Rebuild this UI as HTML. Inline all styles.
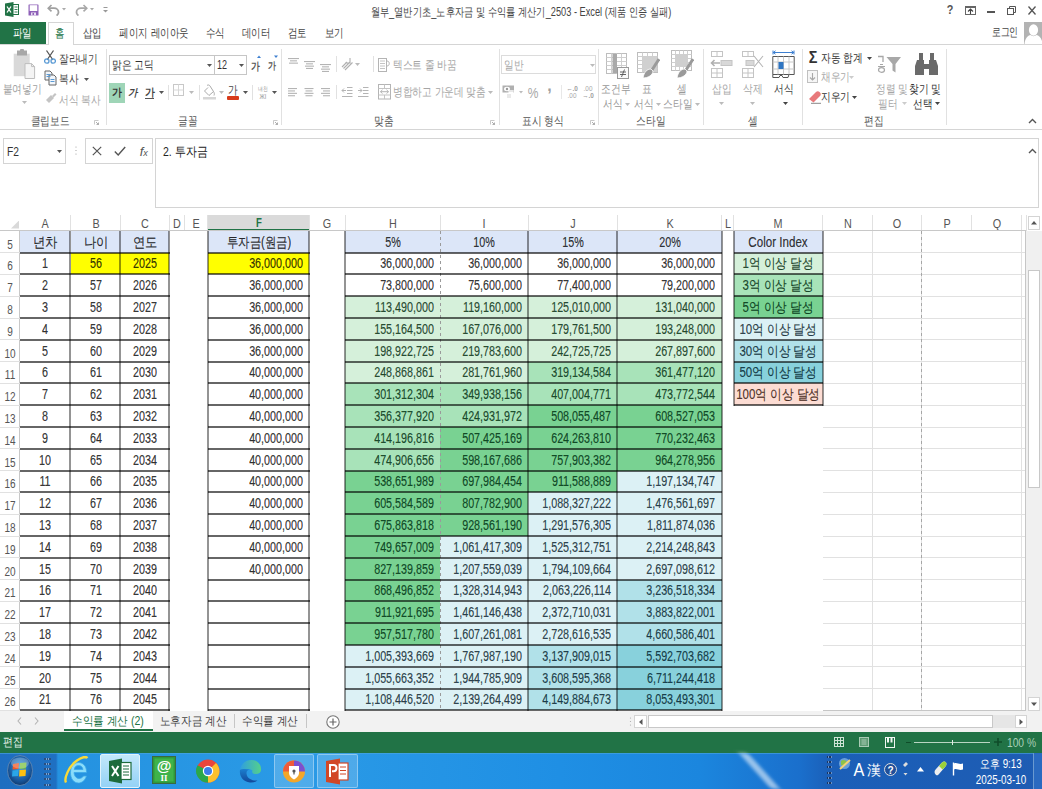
<!DOCTYPE html><html><head><meta charset="utf-8"><style>
body{margin:0;width:1042px;height:789px;overflow:hidden;background:#fff;position:relative;font-family:"Liberation Sans",sans-serif}
.t{position:absolute;white-space:nowrap;line-height:1;}
.r{position:absolute;box-sizing:border-box}
</style></head><body>
<div class="r" style="left:0px;top:0px;width:1042px;height:44px;background:#fff;"></div>
<div class="t" style="left:521px;top:12.4px;font-size:12px;color:#444;font-weight:normal;transform:translate(-50%,-50%) scaleX(0.77);transform-origin:center center;">월부_열반기초_노후자금 및 수익률 계산기_2503 - Excel (제품 인증 실패)</div>
<svg class="r" style="left:5px;top:2px;" width="14" height="15" viewBox="0 0 14 15"><path d="M0 1.5L8.5 0V15L0 13.5Z" fill="#217346"/><rect x="8" y="2.5" width="5.5" height="10" fill="#fff" stroke="#217346" stroke-width="1"/><path d="M9.5 5H12.5M9.5 7.5H12.5M9.5 10H12.5" stroke="#217346" stroke-width="0.9"/><path d="M2 4.5L6 10.5M6 4.5L2 10.5" stroke="#fff" stroke-width="1.3"/></svg>
<svg class="r" style="left:27.5px;top:3.5px;" width="11" height="12" viewBox="0 0 11 12"><rect x="0.5" y="0.5" width="10" height="11" fill="#8e60b8" rx="0.5"/><rect x="1.7" y="1.2" width="7.6" height="5.8" fill="#fff"/><rect x="3" y="8.5" width="5" height="3" fill="#e8e0f0"/><rect x="4.5" y="9" width="1.5" height="2" fill="#8e60b8"/></svg>
<svg class="r" style="left:47px;top:3.5px;" width="13" height="12" viewBox="0 0 13 12"><path d="M4.5 1L1.2 4.2L4.5 7.4" fill="none" stroke="#a0a0a0" stroke-width="1.6"/><path d="M1.8 4.2H7C9.6 4.2 11.5 6 11.5 8.2C11.5 9.8 10.6 11 9.5 11.5" fill="none" stroke="#a0a0a0" stroke-width="1.8"/></svg>
<svg class="r" style="left:62px;top:8px;" width="4" height="3" viewBox="0 0 4 3"><path d="M0 0H4L2 2.5Z" fill="#aaa"/></svg>
<svg class="r" style="left:74.5px;top:3.5px;" width="13" height="12" viewBox="0 0 13 12"><path d="M8.5 1L11.8 4.2L8.5 7.4" fill="none" stroke="#a8a8a8" stroke-width="1.6"/><path d="M11.2 4.2H6C3.4 4.2 1.5 6 1.5 8.2C1.5 9.8 2.4 11 3.5 11.5" fill="none" stroke="#a8a8a8" stroke-width="1.8"/></svg>
<svg class="r" style="left:90px;top:8px;" width="4" height="3" viewBox="0 0 4 3"><path d="M0 0H4L2 2.5Z" fill="#aaa"/></svg>
<svg class="r" style="left:102.5px;top:7px;" width="5" height="6" viewBox="0 0 5 6"><path d="M0.5 0.5H4.5" stroke="#999"/><path d="M0 3H5L2.5 5.5Z" fill="#999"/></svg>
<div class="t" style="left:950px;top:10px;font-size:12px;color:#555;font-weight:bold;transform:translate(-50%,-50%) scaleX(0.9);transform-origin:center center;">?</div>
<svg class="r" style="left:965px;top:5.5px;" width="11" height="9" viewBox="0 0 11 9"><rect x="0.5" y="0.5" width="10" height="8" fill="#fff" stroke="#666"/><rect x="0.5" y="0.5" width="10" height="1.5" fill="#666"/><path d="M5.5 8V3.5M3 5.5L5.5 3L8 5.5" fill="none" stroke="#444" stroke-width="1.1"/></svg>
<div class="r" style="left:987px;top:11.3px;width:7.5px;height:1.3px;background:#555;"></div>
<svg class="r" style="left:1007px;top:5.5px;" width="9" height="9" viewBox="0 0 9 9"><rect x="0.5" y="2.5" width="6" height="6" fill="#fff" stroke="#555"/><path d="M2.5 2.5V0.5H8.5V6.5H6.5" fill="none" stroke="#555"/></svg>
<svg class="r" style="left:1027.5px;top:5.5px;" width="8" height="9" viewBox="0 0 8 9"><path d="M0.5 0.5L7.5 8.5M7.5 0.5L0.5 8.5" stroke="#555" stroke-width="1.3"/></svg>
<div class="r" style="left:0px;top:22px;width:45.5px;height:22px;background:#217346;"></div>
<div class="t" style="left:21.5px;top:32.6px;font-size:12px;color:#fff;font-weight:normal;transform:translate(-50%,-50%) scaleX(0.79);transform-origin:center center;">파일</div>
<div class="r" style="left:0px;top:43.5px;width:1042px;height:1px;background:#d5d5d5;"></div>
<div class="r" style="left:48px;top:22px;width:25.6px;height:22.5px;background:#fff;border:1px solid #d5d5d5;border-bottom:none"></div>
<div class="t" style="left:60px;top:32.6px;font-size:12px;color:#217346;font-weight:normal;transform:translate(-50%,-50%) scaleX(0.79);transform-origin:center center;">홈</div>
<div class="t" style="left:92.2px;top:32.6px;font-size:12px;color:#444;font-weight:normal;transform:translate(-50%,-50%) scaleX(0.79);transform-origin:center center;">삽입</div>
<div class="t" style="left:153.5px;top:32.6px;font-size:12px;color:#444;font-weight:normal;transform:translate(-50%,-50%) scaleX(0.79);transform-origin:center center;">페이지 레이아웃</div>
<div class="t" style="left:214.5px;top:32.6px;font-size:12px;color:#444;font-weight:normal;transform:translate(-50%,-50%) scaleX(0.79);transform-origin:center center;">수식</div>
<div class="t" style="left:256.1px;top:32.6px;font-size:12px;color:#444;font-weight:normal;transform:translate(-50%,-50%) scaleX(0.79);transform-origin:center center;">데이터</div>
<div class="t" style="left:297.0px;top:32.6px;font-size:12px;color:#444;font-weight:normal;transform:translate(-50%,-50%) scaleX(0.79);transform-origin:center center;">검토</div>
<div class="t" style="left:334.0px;top:32.6px;font-size:12px;color:#444;font-weight:normal;transform:translate(-50%,-50%) scaleX(0.79);transform-origin:center center;">보기</div>
<div class="t" style="left:1004.5px;top:32.2px;font-size:12px;color:#444;font-weight:normal;transform:translate(-50%,-50%) scaleX(0.74);transform-origin:center center;">로그인</div>
<div class="r" style="left:1023.5px;top:22px;width:18.5px;height:22px;background:#b3b3b3;"></div>
<svg class="r" style="left:1023.5px;top:22px;" width="18.5" height="22" viewBox="0 0 18.5 22"><ellipse cx="9.5" cy="8" rx="4.6" ry="5.8" fill="#fff"/><path d="M0.5 22C1 16 4 13.5 6.5 13C8 14.5 11 14.5 12.5 13C15 13.5 18 16 18.5 22Z" fill="#fff"/></svg>
<div class="r" style="left:0px;top:44.5px;width:1042px;height:84.5px;background:#fff;"></div>
<div class="r" style="left:0px;top:128.7px;width:1042px;height:1.2px;background:#d5d5d5;"></div>
<div class="r" style="left:106px;top:49px;width:1px;height:76px;background:#e1e1e1;"></div>
<div class="r" style="left:281.4px;top:49px;width:1px;height:76px;background:#e1e1e1;"></div>
<div class="r" style="left:498.7px;top:49px;width:1px;height:76px;background:#e1e1e1;"></div>
<div class="r" style="left:598px;top:49px;width:1px;height:76px;background:#e1e1e1;"></div>
<div class="r" style="left:703px;top:49px;width:1px;height:76px;background:#e1e1e1;"></div>
<div class="r" style="left:802.3px;top:49px;width:1px;height:76px;background:#e1e1e1;"></div>
<div class="r" style="left:945.8px;top:49px;width:1px;height:76px;background:#e1e1e1;"></div>
<div class="t" style="left:50px;top:121.3px;font-size:12px;color:#555;font-weight:normal;transform:translate(-50%,-50%) scaleX(0.81);transform-origin:center center;">클립보드</div>
<div class="t" style="left:188px;top:121.3px;font-size:12px;color:#555;font-weight:normal;transform:translate(-50%,-50%) scaleX(0.81);transform-origin:center center;">글꼴</div>
<div class="t" style="left:383.5px;top:121.3px;font-size:12px;color:#555;font-weight:normal;transform:translate(-50%,-50%) scaleX(0.81);transform-origin:center center;">맞춤</div>
<div class="t" style="left:542.5px;top:121.3px;font-size:12px;color:#555;font-weight:normal;transform:translate(-50%,-50%) scaleX(0.81);transform-origin:center center;">표시 형식</div>
<div class="t" style="left:650.5px;top:121.3px;font-size:12px;color:#555;font-weight:normal;transform:translate(-50%,-50%) scaleX(0.81);transform-origin:center center;">스타일</div>
<div class="t" style="left:752.5px;top:121.3px;font-size:12px;color:#555;font-weight:normal;transform:translate(-50%,-50%) scaleX(0.81);transform-origin:center center;">셀</div>
<div class="t" style="left:874px;top:121.3px;font-size:12px;color:#555;font-weight:normal;transform:translate(-50%,-50%) scaleX(0.81);transform-origin:center center;">편집</div>
<svg class="r" style="left:94px;top:120px;" width="5" height="5" viewBox="0 0 5 5"><path d="M0.5 4.5V0.5H4.5" fill="none" stroke="#bbb" stroke-width="0.8"/><path d="M2 2L4.5 4.5M2.5 4.5H4.5V2.5" fill="none" stroke="#999" stroke-width="0.8"/></svg>
<svg class="r" style="left:273.4px;top:120px;" width="5" height="5" viewBox="0 0 5 5"><path d="M0.5 4.5V0.5H4.5" fill="none" stroke="#bbb" stroke-width="0.8"/><path d="M2 2L4.5 4.5M2.5 4.5H4.5V2.5" fill="none" stroke="#999" stroke-width="0.8"/></svg>
<svg class="r" style="left:490px;top:120px;" width="5" height="5" viewBox="0 0 5 5"><path d="M0.5 4.5V0.5H4.5" fill="none" stroke="#bbb" stroke-width="0.8"/><path d="M2 2L4.5 4.5M2.5 4.5H4.5V2.5" fill="none" stroke="#999" stroke-width="0.8"/></svg>
<svg class="r" style="left:590px;top:120px;" width="5" height="5" viewBox="0 0 5 5"><path d="M0.5 4.5V0.5H4.5" fill="none" stroke="#bbb" stroke-width="0.8"/><path d="M2 2L4.5 4.5M2.5 4.5H4.5V2.5" fill="none" stroke="#999" stroke-width="0.8"/></svg>
<svg class="r" style="left:13px;top:49px;" width="24" height="31" viewBox="0 0 24 31"><rect x="0.7" y="4.7" width="16" height="22.5" fill="#d9d9d9"/><rect x="4" y="1.5" width="10" height="5" fill="#a8a8a8"/><rect x="7" y="0" width="4" height="3" rx="1" fill="#a8a8a8"/><path d="M12 14.6H18.6L21.6 17.6V29.5H12Z" fill="#f4f4f4" stroke="#bdbdbd" stroke-width="1"/><path d="M18.6 14.6V17.6H21.6" fill="none" stroke="#bdbdbd"/></svg>
<div class="t" style="left:22.2px;top:88.7px;font-size:12px;color:#a0a0a0;font-weight:normal;transform:translate(-50%,-50%) scaleX(0.81);transform-origin:center center;">붙여넣기</div>
<svg class="r" style="left:22px;top:101px;" width="5" height="3" viewBox="0 0 5 3"><path d="M0 0H5L2.5 3Z" fill="#bbb"/></svg>
<svg class="r" style="left:44px;top:50px;" width="12" height="14" viewBox="0 0 12 14"><path d="M2.5 0.5L9 10M9.5 0.5L3 10" stroke="#555" stroke-width="1.3"/><circle cx="2.8" cy="11" r="2.2" fill="none" stroke="#5b9bd5" stroke-width="1.3"/><circle cx="9.2" cy="11" r="2.2" fill="none" stroke="#5b9bd5" stroke-width="1.3"/></svg>
<div class="t" style="left:59px;top:58.5px;font-size:12px;color:#444;font-weight:normal;transform:translate(0,-50%) scaleX(0.81);transform-origin:left center;">잘라내기</div>
<svg class="r" style="left:44px;top:70px;" width="13" height="16" viewBox="0 0 13 16"><path d="M1 1H6L8 3V10H1Z" fill="#f2f6fb" stroke="#666" stroke-width="1"/><path d="M5 5H10L12 7V15H5Z" fill="#f2f6fb" stroke="#666" stroke-width="1"/><path d="M2.5 4.5H6.5M2.5 6.5H6.5M6.5 9.5H10.5M6.5 11.5H10.5" stroke="#5b9bd5" stroke-width="1"/></svg>
<div class="t" style="left:59px;top:79px;font-size:12px;color:#444;font-weight:normal;transform:translate(0,-50%) scaleX(0.81);transform-origin:left center;">복사</div>
<svg class="r" style="left:83.5px;top:77.5px;" width="5" height="3" viewBox="0 0 5 3"><path d="M0 0H5L2.5 3Z" fill="#555"/></svg>
<svg class="r" style="left:45px;top:92px;" width="12" height="13" viewBox="0 0 12 13"><path d="M1 8L6 3L9 6L4 11Z" fill="#c4c4c4"/><path d="M7 4L10 1L11.5 2.5L8.5 5.5Z" fill="#c4c4c4"/></svg>
<div class="t" style="left:59px;top:100px;font-size:12px;color:#a8a8a8;font-weight:normal;transform:translate(0,-50%) scaleX(0.81);transform-origin:left center;">서식 복사</div>
<div class="r" style="left:109px;top:55px;width:105.5px;height:19.6px;background:#fff;border:1px solid #c6c6c6"></div>
<div class="r" style="left:214px;top:55px;width:32.8px;height:19.6px;background:#fff;border:1px solid #c6c6c6"></div>
<div class="t" style="left:111.5px;top:65px;font-size:12px;color:#333;font-weight:normal;transform:translate(0,-50%) scaleX(0.81);transform-origin:left center;">맑은 고딕</div>
<div class="t" style="left:216.5px;top:65px;font-size:12px;color:#333;font-weight:normal;transform:translate(0,-50%) scaleX(0.75);transform-origin:left center;">12</div>
<svg class="r" style="left:206.9px;top:64px;" width="5" height="3" viewBox="0 0 5 3"><path d="M0 0H5L2.5 3Z" fill="#555"/></svg>
<svg class="r" style="left:239.4px;top:64px;" width="5" height="3" viewBox="0 0 5 3"><path d="M0 0H5L2.5 3Z" fill="#555"/></svg>
<div class="t" style="left:254.5px;top:65.8px;font-size:11px;color:#555;font-weight:bold;transform:translate(-50%,-50%) scaleX(0.8);transform-origin:center center;">가</div>
<div class="t" style="left:271.5px;top:66.3px;font-size:10px;color:#555;font-weight:bold;transform:translate(-50%,-50%) scaleX(0.8);transform-origin:center center;">가</div>
<svg class="r" style="left:257px;top:55px;" width="4" height="4" viewBox="0 0 4 4"><path d="M0 3L2 0.5L4 3Z" fill="#3d7fd0"/></svg>
<svg class="r" style="left:274px;top:55px;" width="4" height="4" viewBox="0 0 4 4"><path d="M0 0.5H4L2 3Z" fill="#3d7fd0"/></svg>
<div class="r" style="left:109.2px;top:82.8px;width:16px;height:20px;background:#9fd5b7;"></div>
<div class="t" style="left:117.2px;top:92.3px;font-size:10.5px;color:#333;font-weight:bold;transform:translate(-50%,-50%) scaleX(0.9);transform-origin:center center;">가</div>
<div class="t" style="left:133px;top:92.3px;font-size:10.5px;color:#444;font-weight:bold;transform:translate(-50%,-50%) scaleX(0.9);transform-origin:center center;font-style:italic">가</div>
<div class="t" style="left:149.5px;top:92.3px;font-size:10.5px;color:#444;font-weight:bold;transform:translate(-50%,-50%) scaleX(0.9);transform-origin:center center;">가</div>
<div class="r" style="left:145px;top:97.8px;width:9px;height:1px;background:#555;"></div>
<svg class="r" style="left:159px;top:91px;" width="5" height="3" viewBox="0 0 5 3"><path d="M0 0H5L2.5 3Z" fill="#555"/></svg>
<div class="r" style="left:168px;top:85px;width:1px;height:15px;background:#e1e1e1;"></div>
<svg class="r" style="left:173px;top:84px;" width="11" height="12" viewBox="0 0 11 12"><rect x="0.5" y="0.5" width="10" height="11" fill="none" stroke="#c8c8c8"/><path d="M5.5 0.5V11.5M0.5 6H10.5" stroke="#d8d8d8"/></svg>
<svg class="r" style="left:188.5px;top:91px;" width="5" height="3" viewBox="0 0 5 3"><path d="M0 0H5L2.5 3Z" fill="#bbb"/></svg>
<div class="r" style="left:198.5px;top:85px;width:1px;height:15px;background:#e1e1e1;"></div>
<svg class="r" style="left:203px;top:84px;" width="13" height="16" viewBox="0 0 13 16"><path d="M4 1.5C5 0.5 6.5 1 7 2L10.5 7.5L6 11.5L1.5 7L5 3.5" fill="none" stroke="#aaa" stroke-width="1"/><path d="M10.5 7.5C11.5 9 11.5 10.5 11 11.5" fill="none" stroke="#aaa"/><rect x="0" y="13" width="13" height="2.5" fill="#d6d6d6"/></svg>
<svg class="r" style="left:219px;top:91px;" width="5" height="3" viewBox="0 0 5 3"><path d="M0 0H5L2.5 3Z" fill="#bbb"/></svg>
<div class="t" style="left:233px;top:90px;font-size:12px;color:#444;font-weight:normal;transform:translate(-50%,-50%) scaleX(0.81);transform-origin:center center;">가</div>
<div class="r" style="left:227.2px;top:96.2px;width:11.5px;height:3.4px;background:#d83b1a;border-radius:1px"></div>
<svg class="r" style="left:242.5px;top:91px;" width="5" height="3" viewBox="0 0 5 3"><path d="M0 0H5L2.5 3Z" fill="#555"/></svg>
<div class="r" style="left:252.2px;top:85px;width:1px;height:15px;background:#e1e1e1;"></div>
<div class="t" style="left:262.5px;top:88.5px;font-size:6px;color:#999;font-weight:normal;transform:translate(-50%,-50%) scaleX(0.81);transform-origin:center center;">내천</div>
<div class="t" style="left:262.5px;top:95.5px;font-size:7px;color:#999;font-weight:normal;transform:translate(-50%,-50%) scaleX(0.81);transform-origin:center center;">ЖI</div>
<svg class="r" style="left:272.2px;top:91px;" width="5" height="3" viewBox="0 0 5 3"><path d="M0 0H5L2.5 3Z" fill="#555"/></svg>
<svg class="r" style="left:287.5px;top:57.8px;" width="11" height="7.8999999999999995" viewBox="0 0 11 7.8999999999999995"><rect x="0.0" y="0.0" width="11" height="1.1" fill="#b4b4b4"/><rect x="2.0" y="2.3" width="7" height="1.1" fill="#b4b4b4"/><rect x="1.0" y="4.6" width="9" height="1.1" fill="#b4b4b4"/></svg>
<svg class="r" style="left:303.5px;top:60.5px;" width="11" height="10.2" viewBox="0 0 11 10.2"><rect x="0.0" y="0.0" width="11" height="1.1" fill="#b4b4b4"/><rect x="2.0" y="2.3" width="7" height="1.1" fill="#b4b4b4"/><rect x="1.0" y="4.6" width="9" height="1.1" fill="#b4b4b4"/><rect x="2.0" y="6.8999999999999995" width="7" height="1.1" fill="#b4b4b4"/></svg>
<svg class="r" style="left:319.5px;top:63.7px;" width="11" height="10.2" viewBox="0 0 11 10.2"><rect x="0.0" y="0.0" width="11" height="1.1" fill="#b4b4b4"/><rect x="2.0" y="2.3" width="7" height="1.1" fill="#b4b4b4"/><rect x="1.0" y="4.6" width="9" height="1.1" fill="#b4b4b4"/><rect x="2.0" y="6.8999999999999995" width="7" height="1.1" fill="#b4b4b4"/></svg>
<div class="r" style="left:335.8px;top:56px;width:1px;height:16px;background:#e1e1e1;"></div>
<svg class="r" style="left:340.5px;top:57px;" width="13" height="15" viewBox="0 0 13 15"><path d="M1 10L6 5M2.5 11.5L9 5M4 13L11.5 5.5M9 1V6H4" fill="none" stroke="#b0b0b0" stroke-width="1.1"/></svg>
<svg class="r" style="left:355px;top:63px;" width="5" height="3" viewBox="0 0 5 3"><path d="M0 0H5L2.5 3Z" fill="#bbb"/></svg>
<div class="r" style="left:373.3px;top:56px;width:1px;height:16px;background:#e1e1e1;"></div>
<svg class="r" style="left:378px;top:57.5px;" width="13" height="15" viewBox="0 0 13 15"><rect x="0.5" y="0.5" width="8" height="13" fill="none" stroke="#b4b4b4"/><path d="M2 3H7M2 5.5H7M2 8H7M2 10.5H7" stroke="#c4c4c4"/><path d="M9 3C12 3 12 8 9 8" fill="none" stroke="#b4b4b4"/></svg>
<div class="t" style="left:393px;top:65px;font-size:12px;color:#a6a6a6;font-weight:normal;transform:translate(0,-50%) scaleX(0.81);transform-origin:left center;">텍스트 줄 바꿈</div>
<svg class="r" style="left:288px;top:87.5px;" width="11" height="10.6" viewBox="0 0 11 10.6"><rect x="0" y="0.0" width="9" height="1.1" fill="#b4b4b4"/><rect x="0" y="2.4" width="7" height="1.1" fill="#b4b4b4"/><rect x="0" y="4.8" width="9" height="1.1" fill="#b4b4b4"/><rect x="0" y="7.199999999999999" width="7" height="1.1" fill="#b4b4b4"/></svg>
<svg class="r" style="left:303.5px;top:87.5px;" width="10" height="10.6" viewBox="0 0 10 10.6"><rect x="0.5" y="0.0" width="9" height="1.1" fill="#b4b4b4"/><rect x="1.5" y="2.4" width="7" height="1.1" fill="#b4b4b4"/><rect x="0.5" y="4.8" width="9" height="1.1" fill="#b4b4b4"/><rect x="1.5" y="7.199999999999999" width="7" height="1.1" fill="#b4b4b4"/></svg>
<svg class="r" style="left:320.5px;top:87.5px;" width="9" height="10.6" viewBox="0 0 9 10.6"><rect x="0" y="0.0" width="9" height="1.1" fill="#b4b4b4"/><rect x="2" y="2.4" width="7" height="1.1" fill="#b4b4b4"/><rect x="0" y="4.8" width="9" height="1.1" fill="#b4b4b4"/><rect x="2" y="7.199999999999999" width="7" height="1.1" fill="#b4b4b4"/></svg>
<div class="r" style="left:335.8px;top:85px;width:1px;height:14px;background:#e1e1e1;"></div>
<svg class="r" style="left:341px;top:87px;" width="12" height="10" viewBox="0 0 12 10"><path d="M6 0.5H11.5M6 3.5H11.5M6 6.5H11.5M1 9.5H11.5M5 3.5L1 3.5M3 1.5L1 3.5L3 5.5" fill="none" stroke="#b4b4b4" stroke-width="1"/></svg>
<svg class="r" style="left:357px;top:87px;" width="12" height="10" viewBox="0 0 12 10"><path d="M6 0.5H11.5M6 3.5H11.5M6 6.5H11.5M1 9.5H11.5M1 3.5H5M3 1.5L5 3.5L3 5.5" fill="none" stroke="#b4b4b4" stroke-width="1"/></svg>
<svg class="r" style="left:378px;top:84.3px;" width="13" height="15.5" viewBox="0 0 13 15.5"><rect x="0.5" y="0.5" width="12" height="14.5" fill="none" stroke="#b4b4b4"/><path d="M0.5 4.5H12.5M0.5 11H12.5M6.5 0.5V4.5M6.5 11V15" stroke="#c4c4c4"/><path d="M2.5 7.7H10.5M4.5 5.8L2.5 7.7L4.5 9.6M8.5 5.8L10.5 7.7L8.5 9.6" fill="none" stroke="#b4b4b4"/></svg>
<div class="t" style="left:393px;top:92px;font-size:12px;color:#a6a6a6;font-weight:normal;transform:translate(0,-50%) scaleX(0.81);transform-origin:left center;">병합하고 가운데 맞춤</div>
<svg class="r" style="left:488px;top:91px;" width="5" height="3" viewBox="0 0 5 3"><path d="M0 0H5L2.5 3Z" fill="#bbb"/></svg>
<div class="r" style="left:501px;top:55px;width:94.5px;height:19.2px;background:#fff;border:1px solid #dcdcdc"></div>
<div class="t" style="left:503.5px;top:65px;font-size:12px;color:#a8a8a8;font-weight:normal;transform:translate(0,-50%) scaleX(0.81);transform-origin:left center;">일반</div>
<svg class="r" style="left:589.5px;top:64px;" width="5" height="3" viewBox="0 0 5 3"><path d="M0 0H5L2.5 3Z" fill="#bbb"/></svg>
<svg class="r" style="left:502px;top:85px;" width="13" height="14" viewBox="0 0 13 14"><rect x="0.5" y="0.5" width="11.5" height="7" fill="#b0b0b0"/><ellipse cx="5" cy="4" rx="3" ry="2.2" fill="#fff"/><circle cx="5" cy="4" r="1.2" fill="#999"/><rect x="6.5" y="5" width="5" height="3" fill="#fff"/><path d="M7 6H11M5 10H9M5 12H9" stroke="#c8c8c8" stroke-width="0.8"/></svg>
<svg class="r" style="left:519px;top:91px;" width="4" height="3" viewBox="0 0 4 3"><path d="M0 0H4L2 2.5Z" fill="#bbb"/></svg>
<div class="t" style="left:533px;top:92px;font-size:15px;color:#a8a8a8;font-weight:normal;transform:translate(-50%,-50%) scaleX(0.8);transform-origin:center center;">%</div>
<div class="t" style="left:549.5px;top:86px;font-size:16px;color:#a0a0a0;font-weight:bold;transform:translate(-50%,-50%) scaleX(1);transform-origin:center center;">,</div>
<div class="r" style="left:560.6px;top:85px;width:1px;height:14px;background:#e8e8e8;"></div>
<div class="t" style="left:571.5px;top:88.5px;font-size:7.5px;color:#a0a0a0;font-weight:bold;transform:translate(-50%,-50%) scaleX(0.85);transform-origin:center center;">←.0</div>
<div class="t" style="left:572px;top:95.5px;font-size:7.5px;color:#a8a8a8;font-weight:normal;transform:translate(-50%,-50%) scaleX(0.85);transform-origin:center center;">.00</div>
<div class="t" style="left:588px;top:88.5px;font-size:7.5px;color:#a8a8a8;font-weight:normal;transform:translate(-50%,-50%) scaleX(0.85);transform-origin:center center;">.00</div>
<div class="t" style="left:587.5px;top:95.5px;font-size:7.5px;color:#a0a0a0;font-weight:bold;transform:translate(-50%,-50%) scaleX(0.85);transform-origin:center center;">→.0</div>
<svg class="r" style="left:606.2px;top:53.3px;" width="21" height="21" viewBox="0 0 21 21"><rect x="0.5" y="0.5" width="20" height="20" fill="#fff" stroke="#bdbdbd"/><path d="M5.5 0.5V20.5" stroke="#cfcfcf"/><path d="M10.5 0.5V20.5" stroke="#cfcfcf"/><path d="M15.5 0.5V20.5" stroke="#cfcfcf"/><path d="M0.5 4.5H20.5" stroke="#cfcfcf"/><path d="M0.5 8.5H20.5" stroke="#cfcfcf"/><path d="M0.5 12.5H20.5" stroke="#cfcfcf"/><path d="M0.5 16.5H20.5" stroke="#cfcfcf"/><rect x="6.5" y="1" width="4.5" height="19" fill="#a9a9a9"/></svg>
<svg class="r" style="left:617px;top:67px;" width="12" height="12" viewBox="0 0 12 12"><rect x="0.5" y="0.5" width="11" height="11" fill="#fafafa" stroke="#9a9a9a"/><path d="M3 5H9M3 7.5H9M7.5 2.5L4.5 10" stroke="#555" stroke-width="0.9"/></svg>
<svg class="r" style="left:637px;top:52.3px;" width="21" height="21" viewBox="0 0 21 21"><rect x="0.5" y="0.5" width="20" height="20" fill="#fff" stroke="#bdbdbd"/><path d="M5.5 0.5V20.5" stroke="#cfcfcf"/><path d="M10.5 0.5V20.5" stroke="#cfcfcf"/><path d="M15.5 0.5V20.5" stroke="#cfcfcf"/><path d="M0.5 4.5H20.5" stroke="#cfcfcf"/><path d="M0.5 8.5H20.5" stroke="#cfcfcf"/><path d="M0.5 12.5H20.5" stroke="#cfcfcf"/><path d="M0.5 16.5H20.5" stroke="#cfcfcf"/><rect x="5.5" y="5" width="15" height="15" fill="#d0d0d0"/></svg>
<svg class="r" style="left:642px;top:58px;" width="18" height="21" viewBox="0 0 18 21"><path d="M17 1L10 12" stroke="#9a9a9a" stroke-width="3"/><path d="M9 11C5 11 2 14 1 20C6 20 11 17 11 13Z" fill="#9a9a9a" stroke="#fff" stroke-width="0.8"/></svg>
<svg class="r" style="left:670.5px;top:50.4px;" width="21" height="21" viewBox="0 0 21 21"><rect x="0.5" y="0.5" width="20" height="20" fill="#fff" stroke="#bdbdbd"/><path d="M4.5 0.5V20.5" stroke="#cfcfcf"/><path d="M8.5 0.5V20.5" stroke="#cfcfcf"/><path d="M12.5 0.5V20.5" stroke="#cfcfcf"/><path d="M16.5 0.5V20.5" stroke="#cfcfcf"/><path d="M0.5 4.5H20.5" stroke="#cfcfcf"/><path d="M0.5 8.5H20.5" stroke="#cfcfcf"/><path d="M0.5 12.5H20.5" stroke="#cfcfcf"/><path d="M0.5 16.5H20.5" stroke="#cfcfcf"/><rect x="5" y="5" width="11" height="11" fill="#cfcfcf"/></svg>
<svg class="r" style="left:676px;top:58px;" width="18" height="21" viewBox="0 0 18 21"><path d="M17 1L10 12" stroke="#9a9a9a" stroke-width="3"/><path d="M9 11C5 11 2 14 1 20C6 20 11 17 11 13Z" fill="#9a9a9a" stroke="#fff" stroke-width="0.8"/></svg>
<div class="t" style="left:616.2px;top:88.6px;font-size:12px;color:#999;font-weight:normal;transform:translate(-50%,-50%) scaleX(0.81);transform-origin:center center;">조건부</div>
<div class="t" style="left:647px;top:88.6px;font-size:12px;color:#999;font-weight:normal;transform:translate(-50%,-50%) scaleX(0.81);transform-origin:center center;">표</div>
<div class="t" style="left:681.5px;top:88.6px;font-size:12px;color:#999;font-weight:normal;transform:translate(-50%,-50%) scaleX(0.81);transform-origin:center center;">셀</div>
<div class="t" style="left:613px;top:103.7px;font-size:12px;color:#999;font-weight:normal;transform:translate(-50%,-50%) scaleX(0.81);transform-origin:center center;">서식</div>
<div class="t" style="left:644px;top:103.7px;font-size:12px;color:#999;font-weight:normal;transform:translate(-50%,-50%) scaleX(0.81);transform-origin:center center;">서식</div>
<div class="t" style="left:678px;top:103.7px;font-size:12px;color:#999;font-weight:normal;transform:translate(-50%,-50%) scaleX(0.81);transform-origin:center center;">스타일</div>
<svg class="r" style="left:624.5px;top:102.5px;" width="5" height="3" viewBox="0 0 5 3"><path d="M0 0H5L2.5 3Z" fill="#bbb"/></svg>
<svg class="r" style="left:655.5px;top:102.5px;" width="5" height="3" viewBox="0 0 5 3"><path d="M0 0H5L2.5 3Z" fill="#bbb"/></svg>
<svg class="r" style="left:694.5px;top:102.5px;" width="5" height="3" viewBox="0 0 5 3"><path d="M0 0H5L2.5 3Z" fill="#bbb"/></svg>
<svg class="r" style="left:710px;top:51px;" width="23" height="27" viewBox="0 0 23 27"><rect x="1.5" y="0.5" width="11" height="5" fill="none" stroke="#c4c4c4"/><path d="M7 0.5V5.5" stroke="#c4c4c4"/><rect x="11" y="9.5" width="11" height="5" fill="#d8d8d8" stroke="#c4c4c4"/><path d="M10 12H1.5M4.5 9L1.5 12L4.5 15" fill="none" stroke="#b0b0b0" stroke-width="1.6"/><rect x="1.5" y="17.5" width="11" height="9" fill="none" stroke="#c4c4c4"/><path d="M7 17.5V26.5M1.5 22H12.5" stroke="#c4c4c4"/></svg>
<svg class="r" style="left:741px;top:51px;" width="24" height="27" viewBox="0 0 24 27"><rect x="1.5" y="0.5" width="11" height="5" fill="none" stroke="#c4c4c4"/><path d="M7 0.5V5.5" stroke="#c4c4c4"/><rect x="5" y="9.5" width="8" height="5" fill="#d8d8d8" stroke="#c4c4c4"/><path d="M13 5L22 16M22 5L13 16" stroke="#b4b4b4" stroke-width="1.1"/><rect x="1.5" y="17.5" width="11" height="9" fill="none" stroke="#c4c4c4"/><path d="M7 17.5V26.5M1.5 22H12.5" stroke="#c4c4c4"/></svg>
<svg class="r" style="left:772px;top:49.5px;" width="23" height="29" viewBox="0 0 23 29"><path d="M1 2.5H22M1 0.5V4.5M22 0.5V4.5M3.5 0.8L1.3 2.5L3.5 4.2M19.5 0.8L21.7 2.5L19.5 4.2" fill="none" stroke="#3d7fd0" stroke-width="1"/><path d="M0.8 6.5H22.2V24.5H0.8Z" fill="#fff" stroke="#555" stroke-width="1"/><path d="M6 6.5V24.5M11.5 6.5V24.5M17 6.5V24.5M0.8 12H22.2M0.8 19H22.2" stroke="#c8c8c8"/><rect x="6.5" y="12" width="5" height="7" fill="#2f75c2"/><path d="M0.8 24.5V27.5H7L8 25.5H10L11 27.5H16L17 24.5" fill="none" stroke="#555"/></svg>
<div class="t" style="left:721.5px;top:88.7px;font-size:12px;color:#a6a6a6;font-weight:normal;transform:translate(-50%,-50%) scaleX(0.81);transform-origin:center center;">삽입</div>
<div class="t" style="left:753px;top:88.7px;font-size:12px;color:#a6a6a6;font-weight:normal;transform:translate(-50%,-50%) scaleX(0.81);transform-origin:center center;">삭제</div>
<div class="t" style="left:783.5px;top:88.7px;font-size:12px;color:#444;font-weight:normal;transform:translate(-50%,-50%) scaleX(0.81);transform-origin:center center;">서식</div>
<svg class="r" style="left:719px;top:101.5px;" width="5" height="3" viewBox="0 0 5 3"><path d="M0 0H5L2.5 3Z" fill="#bbb"/></svg>
<svg class="r" style="left:750px;top:101.5px;" width="5" height="3" viewBox="0 0 5 3"><path d="M0 0H5L2.5 3Z" fill="#bbb"/></svg>
<svg class="r" style="left:783px;top:101.5px;" width="5" height="3" viewBox="0 0 5 3"><path d="M0 0H5L2.5 3Z" fill="#444"/></svg>
<div class="t" style="left:813px;top:57.5px;font-size:16px;color:#333;font-weight:bold;transform:translate(-50%,-50%) scaleX(0.9);transform-origin:center center;">Σ</div>
<div class="t" style="left:821px;top:57.5px;font-size:12px;color:#333;font-weight:normal;transform:translate(0,-50%) scaleX(0.81);transform-origin:left center;">자동 합계</div>
<svg class="r" style="left:867px;top:56.5px;" width="5" height="3" viewBox="0 0 5 3"><path d="M0 0H5L2.5 3Z" fill="#444"/></svg>
<svg class="r" style="left:807px;top:70px;" width="11" height="13" viewBox="0 0 11 13"><rect x="0.5" y="0.5" width="10" height="12" fill="#f6f6f6" stroke="#c0c0c0"/><path d="M5.5 3V10M3 7.5L5.5 10L8 7.5" fill="none" stroke="#a8a8a8" stroke-width="1.1"/></svg>
<div class="t" style="left:821px;top:77.4px;font-size:12px;color:#a8a8a8;font-weight:normal;transform:translate(0,-50%) scaleX(0.81);transform-origin:left center;">채우기</div>
<svg class="r" style="left:849px;top:76px;" width="5" height="3" viewBox="0 0 5 3"><path d="M0 0H5L2.5 3Z" fill="#ccc"/></svg>
<svg class="r" style="left:807.5px;top:90px;" width="14" height="14" viewBox="0 0 14 14"><path d="M1 9L8 2C9 1 10.5 1 11.5 2L12 2.5C13 3.5 13 5 12 6L5.5 12.5Z" fill="#e8797b"/><path d="M3 13.3H13" stroke="#888" stroke-width="1"/></svg>
<div class="t" style="left:821px;top:97.4px;font-size:12px;color:#333;font-weight:normal;transform:translate(0,-50%) scaleX(0.81);transform-origin:left center;">지우기</div>
<svg class="r" style="left:852px;top:96px;" width="5" height="3" viewBox="0 0 5 3"><path d="M0 0H5L2.5 3Z" fill="#444"/></svg>
<svg class="r" style="left:877px;top:53.5px;" width="26" height="20" viewBox="0 0 26 20"><path d="M1 2.5H6V8" fill="none" stroke="#a8a8a8" stroke-width="1.3"/><path d="M3 10.5H6M1 12.5H8" stroke="#a8a8a8" stroke-width="1.2"/><ellipse cx="4.5" cy="16" rx="3" ry="2.3" fill="none" stroke="#a8a8a8" stroke-width="1.2"/><path d="M9.5 3H24L18.5 10V18.5L15.5 16.5V10Z" fill="#a8a8a8"/></svg>
<svg class="r" style="left:914.5px;top:52px;" width="23" height="24" viewBox="0 0 23 24"><path d="M2 8H9V23H0V14Z M14 8H21L23 14V23H14Z M9 12H14V17H9Z M4 1H8V8H4Z M15 1H19V8H15Z" fill="#6a6a6a"/></svg>
<div class="t" style="left:891.5px;top:88.7px;font-size:12px;color:#a6a6a6;font-weight:normal;transform:translate(-50%,-50%) scaleX(0.81);transform-origin:center center;">정렬 및</div>
<div class="t" style="left:888px;top:103.6px;font-size:12px;color:#a6a6a6;font-weight:normal;transform:translate(-50%,-50%) scaleX(0.81);transform-origin:center center;">필터</div>
<svg class="r" style="left:901.5px;top:102.3px;" width="5" height="3" viewBox="0 0 5 3"><path d="M0 0H5L2.5 3Z" fill="#ccc"/></svg>
<div class="t" style="left:925px;top:88.7px;font-size:12px;color:#333;font-weight:normal;transform:translate(-50%,-50%) scaleX(0.81);transform-origin:center center;">찾기 및</div>
<div class="t" style="left:923px;top:103.6px;font-size:12px;color:#333;font-weight:normal;transform:translate(-50%,-50%) scaleX(0.81);transform-origin:center center;">선택</div>
<svg class="r" style="left:935px;top:102.3px;" width="5" height="3" viewBox="0 0 5 3"><path d="M0 0H5L2.5 3Z" fill="#444"/></svg>
<svg class="r" style="left:1027.5px;top:118px;" width="9" height="6" viewBox="0 0 9 6"><path d="M1 5L4.5 1.5L8 5" fill="none" stroke="#555" stroke-width="1.4"/></svg>
<div class="r" style="left:0px;top:129.9px;width:1042px;height:84.6px;background:#fff;"></div>
<div class="r" style="left:3.2px;top:137.5px;width:63px;height:26.2px;background:#fff;border:1px solid #d4d4d4"></div>
<div class="t" style="left:7px;top:151.5px;font-size:12.5px;color:#333;font-weight:normal;transform:translate(0,-50%) scaleX(0.82);transform-origin:left center;">F2</div>
<svg class="r" style="left:56.5px;top:150px;" width="5" height="3" viewBox="0 0 5 3"><path d="M0 0H5L2.5 3Z" fill="#555"/></svg>
<svg class="r" style="left:74.5px;top:146px;" width="2" height="9" viewBox="0 0 2 9"><circle cx="1" cy="1" r="0.6" fill="#999"/><circle cx="1" cy="4.5" r="0.6" fill="#999"/><circle cx="1" cy="8" r="0.6" fill="#999"/></svg>
<div class="r" style="left:85px;top:137.5px;width:68px;height:26.2px;background:#fff;border:1px solid #d4d4d4"></div>
<svg class="r" style="left:91.5px;top:145.5px;" width="10" height="10" viewBox="0 0 10 10"><path d="M0.8 0.8L9.2 9.2M9.2 0.8L0.8 9.2" stroke="#555" stroke-width="1.2"/></svg>
<svg class="r" style="left:113.5px;top:145.5px;" width="12" height="10" viewBox="0 0 12 10"><path d="M0.8 5.5L4.2 9L11.2 1" fill="none" stroke="#555" stroke-width="1.4"/></svg>
<div class="t" style="left:141.5px;top:150.5px;font-size:13px;color:#555;font-weight:normal;transform:translate(-50%,-50%) scaleX(1);transform-origin:center center;font-style:italic;font-family:"Liberation Serif",serif">f</div>
<div class="t" style="left:145.5px;top:153px;font-size:9px;color:#555;font-weight:normal;transform:translate(-50%,-50%) scaleX(1);transform-origin:center center;font-style:italic;font-family:"Liberation Serif",serif">x</div>
<div class="r" style="left:155px;top:137.5px;width:884px;height:70px;background:#fff;border:1px solid #d4d4d4"></div>
<div class="t" style="left:162.7px;top:151.5px;font-size:12.5px;color:#222;font-weight:normal;transform:translate(0,-50%) scaleX(0.84);transform-origin:left center;">2. 투자금</div>
<svg class="r" style="left:1028px;top:147.5px;" width="9" height="6" viewBox="0 0 9 6"><path d="M1 5L4.5 1.5L8 5" fill="none" stroke="#555" stroke-width="1.4"/></svg>
<div class="r" style="left:0px;top:214.5px;width:1026.4px;height:16.30000000000001px;background:#fff;"></div>
<div class="t" style="left:45.35px;top:224.3px;font-size:12px;color:#555;font-weight:normal;transform:translate(-50%,-50%) scaleX(0.9);transform-origin:center center;">A</div>
<div class="r" style="left:70.0px;top:214.5px;width:1px;height:16.30000000000001px;background:#e1e1e1;"></div>
<div class="t" style="left:95.5px;top:224.3px;font-size:12px;color:#555;font-weight:normal;transform:translate(-50%,-50%) scaleX(0.9);transform-origin:center center;">B</div>
<div class="r" style="left:120.0px;top:214.5px;width:1px;height:16.30000000000001px;background:#e1e1e1;"></div>
<div class="t" style="left:144.9px;top:224.3px;font-size:12px;color:#555;font-weight:normal;transform:translate(-50%,-50%) scaleX(0.9);transform-origin:center center;">C</div>
<div class="r" style="left:168.8px;top:214.5px;width:1px;height:16.30000000000001px;background:#e1e1e1;"></div>
<div class="t" style="left:176.85000000000002px;top:224.3px;font-size:12px;color:#555;font-weight:normal;transform:translate(-50%,-50%) scaleX(0.9);transform-origin:center center;">D</div>
<div class="r" style="left:183.9px;top:214.5px;width:1px;height:16.30000000000001px;background:#e1e1e1;"></div>
<div class="t" style="left:196.10000000000002px;top:224.3px;font-size:12px;color:#555;font-weight:normal;transform:translate(-50%,-50%) scaleX(0.9);transform-origin:center center;">E</div>
<div class="r" style="left:207.3px;top:214.5px;width:1px;height:16.30000000000001px;background:#e1e1e1;"></div>
<div class="r" style="left:207.8px;top:214.5px;width:101.59999999999997px;height:16.30000000000001px;background:#dadada;"></div>
<div class="r" style="left:207.8px;top:229.4px;width:101.59999999999997px;height:2px;background:#217346;"></div>
<div class="t" style="left:258.6px;top:223.3px;font-size:12px;color:#217346;font-weight:bold;transform:translate(-50%,-50%) scaleX(0.8);transform-origin:center center;">F</div>
<div class="r" style="left:308.9px;top:214.5px;width:1px;height:16.30000000000001px;background:#e1e1e1;"></div>
<div class="t" style="left:327.29999999999995px;top:224.3px;font-size:12px;color:#555;font-weight:normal;transform:translate(-50%,-50%) scaleX(0.9);transform-origin:center center;">G</div>
<div class="r" style="left:344.7px;top:214.5px;width:1px;height:16.30000000000001px;background:#e1e1e1;"></div>
<div class="t" style="left:392.6px;top:224.3px;font-size:12px;color:#555;font-weight:normal;transform:translate(-50%,-50%) scaleX(0.9);transform-origin:center center;">H</div>
<div class="r" style="left:439.5px;top:214.5px;width:1px;height:16.30000000000001px;background:#e1e1e1;"></div>
<div class="t" style="left:484.15px;top:224.3px;font-size:12px;color:#555;font-weight:normal;transform:translate(-50%,-50%) scaleX(0.9);transform-origin:center center;">I</div>
<div class="r" style="left:527.8px;top:214.5px;width:1px;height:16.30000000000001px;background:#e1e1e1;"></div>
<div class="t" style="left:572.8px;top:224.3px;font-size:12px;color:#555;font-weight:normal;transform:translate(-50%,-50%) scaleX(0.9);transform-origin:center center;">J</div>
<div class="r" style="left:616.8px;top:214.5px;width:1px;height:16.30000000000001px;background:#e1e1e1;"></div>
<div class="t" style="left:669.55px;top:224.3px;font-size:12px;color:#555;font-weight:normal;transform:translate(-50%,-50%) scaleX(0.9);transform-origin:center center;">K</div>
<div class="r" style="left:721.3px;top:214.5px;width:1px;height:16.30000000000001px;background:#e1e1e1;"></div>
<div class="t" style="left:727.8499999999999px;top:224.3px;font-size:12px;color:#555;font-weight:normal;transform:translate(-50%,-50%) scaleX(0.9);transform-origin:center center;">L</div>
<div class="r" style="left:733.4px;top:214.5px;width:1px;height:16.30000000000001px;background:#e1e1e1;"></div>
<div class="t" style="left:778.4px;top:224.3px;font-size:12px;color:#555;font-weight:normal;transform:translate(-50%,-50%) scaleX(0.9);transform-origin:center center;">M</div>
<div class="r" style="left:822.4px;top:214.5px;width:1px;height:16.30000000000001px;background:#e1e1e1;"></div>
<div class="t" style="left:847.5999999999999px;top:224.3px;font-size:12px;color:#555;font-weight:normal;transform:translate(-50%,-50%) scaleX(0.9);transform-origin:center center;">N</div>
<div class="r" style="left:871.8px;top:214.5px;width:1px;height:16.30000000000001px;background:#e1e1e1;"></div>
<div class="t" style="left:897.05px;top:224.3px;font-size:12px;color:#555;font-weight:normal;transform:translate(-50%,-50%) scaleX(0.9);transform-origin:center center;">O</div>
<div class="r" style="left:921.3px;top:214.5px;width:1px;height:16.30000000000001px;background:#e1e1e1;"></div>
<div class="t" style="left:946.7px;top:224.3px;font-size:12px;color:#555;font-weight:normal;transform:translate(-50%,-50%) scaleX(0.9);transform-origin:center center;">P</div>
<div class="r" style="left:971.1px;top:214.5px;width:1px;height:16.30000000000001px;background:#e1e1e1;"></div>
<div class="t" style="left:996.6px;top:224.3px;font-size:12px;color:#555;font-weight:normal;transform:translate(-50%,-50%) scaleX(0.9);transform-origin:center center;">Q</div>
<div class="r" style="left:1021.1px;top:214.5px;width:1px;height:16.30000000000001px;background:#e1e1e1;"></div>
<div class="r" style="left:1025.9px;top:214.5px;width:1px;height:16.30000000000001px;background:#e1e1e1;"></div>
<div class="r" style="left:0px;top:229.8px;width:1026.4px;height:1px;background:#c8c8c8;"></div>
<svg class="r" style="left:10.5px;top:220px;" width="8.5" height="8.5" viewBox="0 0 8.5 8.5"><path d="M8.5 0V8.5H0Z" fill="#d9d9d9"/></svg>
<div class="r" style="left:19.2px;top:230.8px;width:1px;height:479.8px;background:#c8c8c8;"></div>
<div class="t" style="left:10.3px;top:244.50000000000003px;font-size:12.5px;color:#555;font-weight:normal;transform:translate(-50%,-50%) scaleX(0.8);transform-origin:center center;">5</div>
<div class="r" style="left:0px;top:252.10000000000002px;width:20.2px;height:1px;background:#e1e1e1;"></div>
<div class="t" style="left:10.3px;top:266.3px;font-size:12.5px;color:#555;font-weight:normal;transform:translate(-50%,-50%) scaleX(0.8);transform-origin:center center;">6</div>
<div class="r" style="left:0px;top:273.90000000000003px;width:20.2px;height:1px;background:#e1e1e1;"></div>
<div class="t" style="left:10.3px;top:288.1px;font-size:12.5px;color:#555;font-weight:normal;transform:translate(-50%,-50%) scaleX(0.8);transform-origin:center center;">7</div>
<div class="r" style="left:0px;top:295.70000000000005px;width:20.2px;height:1px;background:#e1e1e1;"></div>
<div class="t" style="left:10.3px;top:309.90000000000003px;font-size:12.5px;color:#555;font-weight:normal;transform:translate(-50%,-50%) scaleX(0.8);transform-origin:center center;">8</div>
<div class="r" style="left:0px;top:317.50000000000006px;width:20.2px;height:1px;background:#e1e1e1;"></div>
<div class="t" style="left:10.3px;top:331.7px;font-size:12.5px;color:#555;font-weight:normal;transform:translate(-50%,-50%) scaleX(0.8);transform-origin:center center;">9</div>
<div class="r" style="left:0px;top:339.3px;width:20.2px;height:1px;background:#e1e1e1;"></div>
<div class="t" style="left:10.3px;top:353.5px;font-size:12.5px;color:#555;font-weight:normal;transform:translate(-50%,-50%) scaleX(0.8);transform-origin:center center;">10</div>
<div class="r" style="left:0px;top:361.1px;width:20.2px;height:1px;background:#e1e1e1;"></div>
<div class="t" style="left:10.3px;top:375.3px;font-size:12.5px;color:#555;font-weight:normal;transform:translate(-50%,-50%) scaleX(0.8);transform-origin:center center;">11</div>
<div class="r" style="left:0px;top:382.90000000000003px;width:20.2px;height:1px;background:#e1e1e1;"></div>
<div class="t" style="left:10.3px;top:397.09999999999997px;font-size:12.5px;color:#555;font-weight:normal;transform:translate(-50%,-50%) scaleX(0.8);transform-origin:center center;">12</div>
<div class="r" style="left:0px;top:404.7px;width:20.2px;height:1px;background:#e1e1e1;"></div>
<div class="t" style="left:10.3px;top:418.90000000000003px;font-size:12.5px;color:#555;font-weight:normal;transform:translate(-50%,-50%) scaleX(0.8);transform-origin:center center;">13</div>
<div class="r" style="left:0px;top:426.50000000000006px;width:20.2px;height:1px;background:#e1e1e1;"></div>
<div class="t" style="left:10.3px;top:440.7px;font-size:12.5px;color:#555;font-weight:normal;transform:translate(-50%,-50%) scaleX(0.8);transform-origin:center center;">14</div>
<div class="r" style="left:0px;top:448.3px;width:20.2px;height:1px;background:#e1e1e1;"></div>
<div class="t" style="left:10.3px;top:462.5px;font-size:12.5px;color:#555;font-weight:normal;transform:translate(-50%,-50%) scaleX(0.8);transform-origin:center center;">15</div>
<div class="r" style="left:0px;top:470.1px;width:20.2px;height:1px;background:#e1e1e1;"></div>
<div class="t" style="left:10.3px;top:484.3px;font-size:12.5px;color:#555;font-weight:normal;transform:translate(-50%,-50%) scaleX(0.8);transform-origin:center center;">16</div>
<div class="r" style="left:0px;top:491.90000000000003px;width:20.2px;height:1px;background:#e1e1e1;"></div>
<div class="t" style="left:10.3px;top:506.1px;font-size:12.5px;color:#555;font-weight:normal;transform:translate(-50%,-50%) scaleX(0.8);transform-origin:center center;">17</div>
<div class="r" style="left:0px;top:513.7px;width:20.2px;height:1px;background:#e1e1e1;"></div>
<div class="t" style="left:10.3px;top:527.9px;font-size:12.5px;color:#555;font-weight:normal;transform:translate(-50%,-50%) scaleX(0.8);transform-origin:center center;">18</div>
<div class="r" style="left:0px;top:535.5px;width:20.2px;height:1px;background:#e1e1e1;"></div>
<div class="t" style="left:10.3px;top:549.6999999999999px;font-size:12.5px;color:#555;font-weight:normal;transform:translate(-50%,-50%) scaleX(0.8);transform-origin:center center;">19</div>
<div class="r" style="left:0px;top:557.3px;width:20.2px;height:1px;background:#e1e1e1;"></div>
<div class="t" style="left:10.3px;top:571.4999999999999px;font-size:12.5px;color:#555;font-weight:normal;transform:translate(-50%,-50%) scaleX(0.8);transform-origin:center center;">20</div>
<div class="r" style="left:0px;top:579.0999999999999px;width:20.2px;height:1px;background:#e1e1e1;"></div>
<div class="t" style="left:10.3px;top:593.3px;font-size:12.5px;color:#555;font-weight:normal;transform:translate(-50%,-50%) scaleX(0.8);transform-origin:center center;">21</div>
<div class="r" style="left:0px;top:600.9px;width:20.2px;height:1px;background:#e1e1e1;"></div>
<div class="t" style="left:10.3px;top:615.1px;font-size:12.5px;color:#555;font-weight:normal;transform:translate(-50%,-50%) scaleX(0.8);transform-origin:center center;">22</div>
<div class="r" style="left:0px;top:622.7px;width:20.2px;height:1px;background:#e1e1e1;"></div>
<div class="t" style="left:10.3px;top:636.9px;font-size:12.5px;color:#555;font-weight:normal;transform:translate(-50%,-50%) scaleX(0.8);transform-origin:center center;">23</div>
<div class="r" style="left:0px;top:644.5px;width:20.2px;height:1px;background:#e1e1e1;"></div>
<div class="t" style="left:10.3px;top:658.6999999999999px;font-size:12.5px;color:#555;font-weight:normal;transform:translate(-50%,-50%) scaleX(0.8);transform-origin:center center;">24</div>
<div class="r" style="left:0px;top:666.3px;width:20.2px;height:1px;background:#e1e1e1;"></div>
<div class="t" style="left:10.3px;top:680.4999999999999px;font-size:12.5px;color:#555;font-weight:normal;transform:translate(-50%,-50%) scaleX(0.8);transform-origin:center center;">25</div>
<div class="r" style="left:0px;top:688.0999999999999px;width:20.2px;height:1px;background:#e1e1e1;"></div>
<div class="t" style="left:10.3px;top:702.3px;font-size:12.5px;color:#555;font-weight:normal;transform:translate(-50%,-50%) scaleX(0.8);transform-origin:center center;">26</div>
<div class="r" style="left:0px;top:709.9px;width:20.2px;height:1px;background:#e1e1e1;"></div>
<div class="r" style="left:822.9px;top:252.10000000000002px;width:203.5000000000001px;height:1px;background:#e1e1e1;"></div>
<div class="r" style="left:822.9px;top:273.90000000000003px;width:203.5000000000001px;height:1px;background:#e1e1e1;"></div>
<div class="r" style="left:822.9px;top:295.70000000000005px;width:203.5000000000001px;height:1px;background:#e1e1e1;"></div>
<div class="r" style="left:822.9px;top:317.50000000000006px;width:203.5000000000001px;height:1px;background:#e1e1e1;"></div>
<div class="r" style="left:822.9px;top:339.3px;width:203.5000000000001px;height:1px;background:#e1e1e1;"></div>
<div class="r" style="left:822.9px;top:361.1px;width:203.5000000000001px;height:1px;background:#e1e1e1;"></div>
<div class="r" style="left:822.9px;top:382.90000000000003px;width:203.5000000000001px;height:1px;background:#e1e1e1;"></div>
<div class="r" style="left:822.9px;top:404.7px;width:203.5000000000001px;height:1px;background:#e1e1e1;"></div>
<div class="r" style="left:822.9px;top:426.50000000000006px;width:203.5000000000001px;height:1px;background:#e1e1e1;"></div>
<div class="r" style="left:822.9px;top:448.3px;width:203.5000000000001px;height:1px;background:#e1e1e1;"></div>
<div class="r" style="left:822.9px;top:470.1px;width:203.5000000000001px;height:1px;background:#e1e1e1;"></div>
<div class="r" style="left:822.9px;top:491.90000000000003px;width:203.5000000000001px;height:1px;background:#e1e1e1;"></div>
<div class="r" style="left:822.9px;top:513.7px;width:203.5000000000001px;height:1px;background:#e1e1e1;"></div>
<div class="r" style="left:822.9px;top:535.5px;width:203.5000000000001px;height:1px;background:#e1e1e1;"></div>
<div class="r" style="left:822.9px;top:557.3px;width:203.5000000000001px;height:1px;background:#e1e1e1;"></div>
<div class="r" style="left:822.9px;top:579.0999999999999px;width:203.5000000000001px;height:1px;background:#e1e1e1;"></div>
<div class="r" style="left:822.9px;top:600.9px;width:203.5000000000001px;height:1px;background:#e1e1e1;"></div>
<div class="r" style="left:822.9px;top:622.7px;width:203.5000000000001px;height:1px;background:#e1e1e1;"></div>
<div class="r" style="left:822.9px;top:644.5px;width:203.5000000000001px;height:1px;background:#e1e1e1;"></div>
<div class="r" style="left:822.9px;top:666.3px;width:203.5000000000001px;height:1px;background:#e1e1e1;"></div>
<div class="r" style="left:822.9px;top:688.0999999999999px;width:203.5000000000001px;height:1px;background:#e1e1e1;"></div>
<div class="r" style="left:822.9px;top:709.9px;width:203.5000000000001px;height:1px;background:#e1e1e1;"></div>
<div class="r" style="left:871.8px;top:230.8px;width:1px;height:479.8px;background:#e1e1e1;"></div>
<div class="r" style="left:921.3px;top:230.8px;width:1px;height:479.8px;background:#e1e1e1;"></div>
<div class="r" style="left:1021.1px;top:230.8px;width:1px;height:479.8px;background:#e1e1e1;"></div>
<div class="r" style="left:921.3px;top:230.8px;width:1px;height:479.8px;background:repeating-linear-gradient(to bottom,#a6a6a6 0 3px,transparent 3px 6px)"></div>
<div class="r" style="left:1025.4px;top:230.8px;width:1px;height:480.8px;background:#c6c6c6;"></div>
<div class="r" style="left:822.9px;top:710.1px;width:203.5000000000001px;height:1px;background:#c6c6c6;"></div>
<div class="r" style="left:20.2px;top:230.8px;width:50.3px;height:21.8px;background:#dce6f8;"></div>
<div class="r" style="left:70.5px;top:230.8px;width:50.0px;height:21.8px;background:#dce6f8;"></div>
<div class="r" style="left:120.5px;top:230.8px;width:48.80000000000001px;height:21.8px;background:#dce6f8;"></div>
<div class="r" style="left:70.5px;top:252.60000000000002px;width:50.0px;height:21.8px;background:#ffff00;"></div>
<div class="r" style="left:120.5px;top:252.60000000000002px;width:48.80000000000001px;height:21.8px;background:#ffff00;"></div>
<div class="r" style="left:207.8px;top:230.8px;width:101.59999999999997px;height:21.8px;background:#dce6f8;"></div>
<div class="r" style="left:207.8px;top:252.60000000000002px;width:101.59999999999997px;height:21.8px;background:#ffff00;"></div>
<div class="r" style="left:345.2px;top:230.8px;width:94.80000000000001px;height:21.8px;background:#dce6f8;"></div>
<div class="r" style="left:440px;top:230.8px;width:88.29999999999995px;height:21.8px;background:#dce6f8;"></div>
<div class="r" style="left:528.3px;top:230.8px;width:89.0px;height:21.8px;background:#dce6f8;"></div>
<div class="r" style="left:617.3px;top:230.8px;width:104.5px;height:21.8px;background:#dce6f8;"></div>
<div class="r" style="left:733.9px;top:230.8px;width:89.0px;height:21.8px;background:#dce6f8;"></div>
<div class="r" style="left:345.2px;top:296.20000000000005px;width:94.80000000000001px;height:21.8px;background:#d5f0da;"></div>
<div class="r" style="left:440px;top:296.20000000000005px;width:88.29999999999995px;height:21.8px;background:#d5f0da;"></div>
<div class="r" style="left:528.3px;top:296.20000000000005px;width:89.0px;height:21.8px;background:#d5f0da;"></div>
<div class="r" style="left:617.3px;top:296.20000000000005px;width:104.5px;height:21.8px;background:#d5f0da;"></div>
<div class="r" style="left:345.2px;top:318.0px;width:94.80000000000001px;height:21.8px;background:#d5f0da;"></div>
<div class="r" style="left:440px;top:318.0px;width:88.29999999999995px;height:21.8px;background:#d5f0da;"></div>
<div class="r" style="left:528.3px;top:318.0px;width:89.0px;height:21.8px;background:#d5f0da;"></div>
<div class="r" style="left:617.3px;top:318.0px;width:104.5px;height:21.8px;background:#d5f0da;"></div>
<div class="r" style="left:345.2px;top:339.8px;width:94.80000000000001px;height:21.8px;background:#d5f0da;"></div>
<div class="r" style="left:440px;top:339.8px;width:88.29999999999995px;height:21.8px;background:#d5f0da;"></div>
<div class="r" style="left:528.3px;top:339.8px;width:89.0px;height:21.8px;background:#d5f0da;"></div>
<div class="r" style="left:617.3px;top:339.8px;width:104.5px;height:21.8px;background:#d5f0da;"></div>
<div class="r" style="left:345.2px;top:361.6px;width:94.80000000000001px;height:21.8px;background:#d5f0da;"></div>
<div class="r" style="left:440px;top:361.6px;width:88.29999999999995px;height:21.8px;background:#d5f0da;"></div>
<div class="r" style="left:528.3px;top:361.6px;width:89.0px;height:21.8px;background:#a8e3b9;"></div>
<div class="r" style="left:617.3px;top:361.6px;width:104.5px;height:21.8px;background:#a8e3b9;"></div>
<div class="r" style="left:345.2px;top:383.4px;width:94.80000000000001px;height:21.8px;background:#a8e3b9;"></div>
<div class="r" style="left:440px;top:383.4px;width:88.29999999999995px;height:21.8px;background:#a8e3b9;"></div>
<div class="r" style="left:528.3px;top:383.4px;width:89.0px;height:21.8px;background:#a8e3b9;"></div>
<div class="r" style="left:617.3px;top:383.4px;width:104.5px;height:21.8px;background:#a8e3b9;"></div>
<div class="r" style="left:345.2px;top:405.20000000000005px;width:94.80000000000001px;height:21.8px;background:#a8e3b9;"></div>
<div class="r" style="left:440px;top:405.20000000000005px;width:88.29999999999995px;height:21.8px;background:#a8e3b9;"></div>
<div class="r" style="left:528.3px;top:405.20000000000005px;width:89.0px;height:21.8px;background:#79d292;"></div>
<div class="r" style="left:617.3px;top:405.20000000000005px;width:104.5px;height:21.8px;background:#79d292;"></div>
<div class="r" style="left:345.2px;top:427.0px;width:94.80000000000001px;height:21.8px;background:#a8e3b9;"></div>
<div class="r" style="left:440px;top:427.0px;width:88.29999999999995px;height:21.8px;background:#79d292;"></div>
<div class="r" style="left:528.3px;top:427.0px;width:89.0px;height:21.8px;background:#79d292;"></div>
<div class="r" style="left:617.3px;top:427.0px;width:104.5px;height:21.8px;background:#79d292;"></div>
<div class="r" style="left:345.2px;top:448.8px;width:94.80000000000001px;height:21.8px;background:#a8e3b9;"></div>
<div class="r" style="left:440px;top:448.8px;width:88.29999999999995px;height:21.8px;background:#79d292;"></div>
<div class="r" style="left:528.3px;top:448.8px;width:89.0px;height:21.8px;background:#79d292;"></div>
<div class="r" style="left:617.3px;top:448.8px;width:104.5px;height:21.8px;background:#79d292;"></div>
<div class="r" style="left:345.2px;top:470.6px;width:94.80000000000001px;height:21.8px;background:#79d292;"></div>
<div class="r" style="left:440px;top:470.6px;width:88.29999999999995px;height:21.8px;background:#79d292;"></div>
<div class="r" style="left:528.3px;top:470.6px;width:89.0px;height:21.8px;background:#79d292;"></div>
<div class="r" style="left:617.3px;top:470.6px;width:104.5px;height:21.8px;background:#dcf1f5;"></div>
<div class="r" style="left:345.2px;top:492.40000000000003px;width:94.80000000000001px;height:21.8px;background:#79d292;"></div>
<div class="r" style="left:440px;top:492.40000000000003px;width:88.29999999999995px;height:21.8px;background:#79d292;"></div>
<div class="r" style="left:528.3px;top:492.40000000000003px;width:89.0px;height:21.8px;background:#dcf1f5;"></div>
<div class="r" style="left:617.3px;top:492.40000000000003px;width:104.5px;height:21.8px;background:#dcf1f5;"></div>
<div class="r" style="left:345.2px;top:514.2px;width:94.80000000000001px;height:21.8px;background:#79d292;"></div>
<div class="r" style="left:440px;top:514.2px;width:88.29999999999995px;height:21.8px;background:#79d292;"></div>
<div class="r" style="left:528.3px;top:514.2px;width:89.0px;height:21.8px;background:#dcf1f5;"></div>
<div class="r" style="left:617.3px;top:514.2px;width:104.5px;height:21.8px;background:#dcf1f5;"></div>
<div class="r" style="left:345.2px;top:536.0px;width:94.80000000000001px;height:21.8px;background:#79d292;"></div>
<div class="r" style="left:440px;top:536.0px;width:88.29999999999995px;height:21.8px;background:#dcf1f5;"></div>
<div class="r" style="left:528.3px;top:536.0px;width:89.0px;height:21.8px;background:#dcf1f5;"></div>
<div class="r" style="left:617.3px;top:536.0px;width:104.5px;height:21.8px;background:#dcf1f5;"></div>
<div class="r" style="left:345.2px;top:557.8px;width:94.80000000000001px;height:21.8px;background:#79d292;"></div>
<div class="r" style="left:440px;top:557.8px;width:88.29999999999995px;height:21.8px;background:#dcf1f5;"></div>
<div class="r" style="left:528.3px;top:557.8px;width:89.0px;height:21.8px;background:#dcf1f5;"></div>
<div class="r" style="left:617.3px;top:557.8px;width:104.5px;height:21.8px;background:#dcf1f5;"></div>
<div class="r" style="left:345.2px;top:579.6px;width:94.80000000000001px;height:21.8px;background:#79d292;"></div>
<div class="r" style="left:440px;top:579.6px;width:88.29999999999995px;height:21.8px;background:#dcf1f5;"></div>
<div class="r" style="left:528.3px;top:579.6px;width:89.0px;height:21.8px;background:#dcf1f5;"></div>
<div class="r" style="left:617.3px;top:579.6px;width:104.5px;height:21.8px;background:#b1e1e9;"></div>
<div class="r" style="left:345.2px;top:601.4000000000001px;width:94.80000000000001px;height:21.8px;background:#79d292;"></div>
<div class="r" style="left:440px;top:601.4000000000001px;width:88.29999999999995px;height:21.8px;background:#dcf1f5;"></div>
<div class="r" style="left:528.3px;top:601.4000000000001px;width:89.0px;height:21.8px;background:#dcf1f5;"></div>
<div class="r" style="left:617.3px;top:601.4000000000001px;width:104.5px;height:21.8px;background:#b1e1e9;"></div>
<div class="r" style="left:345.2px;top:623.2px;width:94.80000000000001px;height:21.8px;background:#79d292;"></div>
<div class="r" style="left:440px;top:623.2px;width:88.29999999999995px;height:21.8px;background:#dcf1f5;"></div>
<div class="r" style="left:528.3px;top:623.2px;width:89.0px;height:21.8px;background:#dcf1f5;"></div>
<div class="r" style="left:617.3px;top:623.2px;width:104.5px;height:21.8px;background:#b1e1e9;"></div>
<div class="r" style="left:345.2px;top:645.0px;width:94.80000000000001px;height:21.8px;background:#dcf1f5;"></div>
<div class="r" style="left:440px;top:645.0px;width:88.29999999999995px;height:21.8px;background:#dcf1f5;"></div>
<div class="r" style="left:528.3px;top:645.0px;width:89.0px;height:21.8px;background:#b1e1e9;"></div>
<div class="r" style="left:617.3px;top:645.0px;width:104.5px;height:21.8px;background:#88d1dc;"></div>
<div class="r" style="left:345.2px;top:666.8px;width:94.80000000000001px;height:21.8px;background:#dcf1f5;"></div>
<div class="r" style="left:440px;top:666.8px;width:88.29999999999995px;height:21.8px;background:#dcf1f5;"></div>
<div class="r" style="left:528.3px;top:666.8px;width:89.0px;height:21.8px;background:#b1e1e9;"></div>
<div class="r" style="left:617.3px;top:666.8px;width:104.5px;height:21.8px;background:#88d1dc;"></div>
<div class="r" style="left:345.2px;top:688.6px;width:94.80000000000001px;height:21.8px;background:#dcf1f5;"></div>
<div class="r" style="left:440px;top:688.6px;width:88.29999999999995px;height:21.8px;background:#dcf1f5;"></div>
<div class="r" style="left:528.3px;top:688.6px;width:89.0px;height:21.8px;background:#b1e1e9;"></div>
<div class="r" style="left:617.3px;top:688.6px;width:104.5px;height:21.8px;background:#88d1dc;"></div>
<div class="r" style="left:733.9px;top:252.60000000000002px;width:89.0px;height:21.8px;background:#d5f0da;"></div>
<div class="r" style="left:733.9px;top:274.40000000000003px;width:89.0px;height:21.8px;background:#a8e3b9;"></div>
<div class="r" style="left:733.9px;top:296.20000000000005px;width:89.0px;height:21.8px;background:#79d292;"></div>
<div class="r" style="left:733.9px;top:318.0px;width:89.0px;height:21.8px;background:#dcf1f5;"></div>
<div class="r" style="left:733.9px;top:339.8px;width:89.0px;height:21.8px;background:#b1e1e9;"></div>
<div class="r" style="left:733.9px;top:361.6px;width:89.0px;height:21.8px;background:#88d1dc;"></div>
<div class="r" style="left:733.9px;top:383.4px;width:89.0px;height:21.8px;background:#fcdcd3;"></div>
<div class="r" style="left:439.5px;top:230.8px;width:1px;height:479.8px;background:repeating-linear-gradient(to bottom,#9a9a9a 0 3px,transparent 3px 6px)"></div>
<div class="r" style="left:69.35px;top:230.8px;width:1.3px;height:480.2000000000001px;background:rgba(0,0,0,0.42);"></div>
<div class="r" style="left:119.35px;top:230.8px;width:1.3px;height:480.2000000000001px;background:rgba(0,0,0,0.42);"></div>
<div class="r" style="left:168.35px;top:230.8px;width:1.3px;height:480.2000000000001px;background:rgba(0,0,0,0.42);"></div>
<div class="r" style="left:207.35px;top:230.8px;width:1.3px;height:480.2000000000001px;background:rgba(0,0,0,0.42);"></div>
<div class="r" style="left:308.35px;top:230.8px;width:1.3px;height:480.2000000000001px;background:rgba(0,0,0,0.42);"></div>
<div class="r" style="left:20.2px;top:252.35px;width:149.70000000000002px;height:1.3px;background:rgba(0,0,0,0.6);"></div>
<div class="r" style="left:207.8px;top:252.35px;width:102.19999999999996px;height:1.3px;background:rgba(0,0,0,0.6);"></div>
<div class="r" style="left:345.2px;top:252.35px;width:377.2px;height:1.3px;background:rgba(0,0,0,0.6);"></div>
<div class="r" style="left:20.2px;top:273.35px;width:149.70000000000002px;height:1.3px;background:rgba(0,0,0,0.6);"></div>
<div class="r" style="left:207.8px;top:273.35px;width:102.19999999999996px;height:1.3px;background:rgba(0,0,0,0.6);"></div>
<div class="r" style="left:345.2px;top:273.35px;width:377.2px;height:1.3px;background:rgba(0,0,0,0.6);"></div>
<div class="r" style="left:20.2px;top:295.35px;width:149.70000000000002px;height:1.3px;background:rgba(0,0,0,0.6);"></div>
<div class="r" style="left:207.8px;top:295.35px;width:102.19999999999996px;height:1.3px;background:rgba(0,0,0,0.6);"></div>
<div class="r" style="left:345.2px;top:295.35px;width:377.2px;height:1.3px;background:rgba(0,0,0,0.6);"></div>
<div class="r" style="left:20.2px;top:317.35px;width:149.70000000000002px;height:1.3px;background:rgba(0,0,0,0.6);"></div>
<div class="r" style="left:207.8px;top:317.35px;width:102.19999999999996px;height:1.3px;background:rgba(0,0,0,0.6);"></div>
<div class="r" style="left:345.2px;top:317.35px;width:377.2px;height:1.3px;background:rgba(0,0,0,0.6);"></div>
<div class="r" style="left:20.2px;top:339.35px;width:149.70000000000002px;height:1.3px;background:rgba(0,0,0,0.6);"></div>
<div class="r" style="left:207.8px;top:339.35px;width:102.19999999999996px;height:1.3px;background:rgba(0,0,0,0.6);"></div>
<div class="r" style="left:345.2px;top:339.35px;width:377.2px;height:1.3px;background:rgba(0,0,0,0.6);"></div>
<div class="r" style="left:20.2px;top:361.35px;width:149.70000000000002px;height:1.3px;background:rgba(0,0,0,0.6);"></div>
<div class="r" style="left:207.8px;top:361.35px;width:102.19999999999996px;height:1.3px;background:rgba(0,0,0,0.6);"></div>
<div class="r" style="left:345.2px;top:361.35px;width:377.2px;height:1.3px;background:rgba(0,0,0,0.6);"></div>
<div class="r" style="left:20.2px;top:382.35px;width:149.70000000000002px;height:1.3px;background:rgba(0,0,0,0.6);"></div>
<div class="r" style="left:207.8px;top:382.35px;width:102.19999999999996px;height:1.3px;background:rgba(0,0,0,0.6);"></div>
<div class="r" style="left:345.2px;top:382.35px;width:377.2px;height:1.3px;background:rgba(0,0,0,0.6);"></div>
<div class="r" style="left:20.2px;top:404.35px;width:149.70000000000002px;height:1.3px;background:rgba(0,0,0,0.6);"></div>
<div class="r" style="left:207.8px;top:404.35px;width:102.19999999999996px;height:1.3px;background:rgba(0,0,0,0.6);"></div>
<div class="r" style="left:345.2px;top:404.35px;width:377.2px;height:1.3px;background:rgba(0,0,0,0.6);"></div>
<div class="r" style="left:20.2px;top:426.35px;width:149.70000000000002px;height:1.3px;background:rgba(0,0,0,0.6);"></div>
<div class="r" style="left:207.8px;top:426.35px;width:102.19999999999996px;height:1.3px;background:rgba(0,0,0,0.6);"></div>
<div class="r" style="left:345.2px;top:426.35px;width:377.2px;height:1.3px;background:rgba(0,0,0,0.6);"></div>
<div class="r" style="left:20.2px;top:448.35px;width:149.70000000000002px;height:1.3px;background:rgba(0,0,0,0.6);"></div>
<div class="r" style="left:207.8px;top:448.35px;width:102.19999999999996px;height:1.3px;background:rgba(0,0,0,0.6);"></div>
<div class="r" style="left:345.2px;top:448.35px;width:377.2px;height:1.3px;background:rgba(0,0,0,0.6);"></div>
<div class="r" style="left:20.2px;top:470.35px;width:149.70000000000002px;height:1.3px;background:rgba(0,0,0,0.6);"></div>
<div class="r" style="left:207.8px;top:470.35px;width:102.19999999999996px;height:1.3px;background:rgba(0,0,0,0.6);"></div>
<div class="r" style="left:345.2px;top:470.35px;width:377.2px;height:1.3px;background:rgba(0,0,0,0.6);"></div>
<div class="r" style="left:20.2px;top:491.35px;width:149.70000000000002px;height:1.3px;background:rgba(0,0,0,0.6);"></div>
<div class="r" style="left:207.8px;top:491.35px;width:102.19999999999996px;height:1.3px;background:rgba(0,0,0,0.6);"></div>
<div class="r" style="left:345.2px;top:491.35px;width:377.2px;height:1.3px;background:rgba(0,0,0,0.6);"></div>
<div class="r" style="left:20.2px;top:513.35px;width:149.70000000000002px;height:1.3px;background:rgba(0,0,0,0.6);"></div>
<div class="r" style="left:207.8px;top:513.35px;width:102.19999999999996px;height:1.3px;background:rgba(0,0,0,0.6);"></div>
<div class="r" style="left:345.2px;top:513.35px;width:377.2px;height:1.3px;background:rgba(0,0,0,0.6);"></div>
<div class="r" style="left:20.2px;top:535.35px;width:149.70000000000002px;height:1.3px;background:rgba(0,0,0,0.6);"></div>
<div class="r" style="left:207.8px;top:535.35px;width:102.19999999999996px;height:1.3px;background:rgba(0,0,0,0.6);"></div>
<div class="r" style="left:345.2px;top:535.35px;width:377.2px;height:1.3px;background:rgba(0,0,0,0.6);"></div>
<div class="r" style="left:20.2px;top:557.35px;width:149.70000000000002px;height:1.3px;background:rgba(0,0,0,0.6);"></div>
<div class="r" style="left:207.8px;top:557.35px;width:102.19999999999996px;height:1.3px;background:rgba(0,0,0,0.6);"></div>
<div class="r" style="left:345.2px;top:557.35px;width:377.2px;height:1.3px;background:rgba(0,0,0,0.6);"></div>
<div class="r" style="left:20.2px;top:579.35px;width:149.70000000000002px;height:1.3px;background:rgba(0,0,0,0.6);"></div>
<div class="r" style="left:207.8px;top:579.35px;width:102.19999999999996px;height:1.3px;background:rgba(0,0,0,0.6);"></div>
<div class="r" style="left:345.2px;top:579.35px;width:377.2px;height:1.3px;background:rgba(0,0,0,0.6);"></div>
<div class="r" style="left:20.2px;top:600.35px;width:149.70000000000002px;height:1.3px;background:rgba(0,0,0,0.6);"></div>
<div class="r" style="left:207.8px;top:600.35px;width:102.19999999999996px;height:1.3px;background:rgba(0,0,0,0.6);"></div>
<div class="r" style="left:345.2px;top:600.35px;width:377.2px;height:1.3px;background:rgba(0,0,0,0.6);"></div>
<div class="r" style="left:20.2px;top:622.35px;width:149.70000000000002px;height:1.3px;background:rgba(0,0,0,0.6);"></div>
<div class="r" style="left:207.8px;top:622.35px;width:102.19999999999996px;height:1.3px;background:rgba(0,0,0,0.6);"></div>
<div class="r" style="left:345.2px;top:622.35px;width:377.2px;height:1.3px;background:rgba(0,0,0,0.6);"></div>
<div class="r" style="left:20.2px;top:644.35px;width:149.70000000000002px;height:1.3px;background:rgba(0,0,0,0.6);"></div>
<div class="r" style="left:207.8px;top:644.35px;width:102.19999999999996px;height:1.3px;background:rgba(0,0,0,0.6);"></div>
<div class="r" style="left:345.2px;top:644.35px;width:377.2px;height:1.3px;background:rgba(0,0,0,0.6);"></div>
<div class="r" style="left:20.2px;top:666.35px;width:149.70000000000002px;height:1.3px;background:rgba(0,0,0,0.6);"></div>
<div class="r" style="left:207.8px;top:666.35px;width:102.19999999999996px;height:1.3px;background:rgba(0,0,0,0.6);"></div>
<div class="r" style="left:345.2px;top:666.35px;width:377.2px;height:1.3px;background:rgba(0,0,0,0.6);"></div>
<div class="r" style="left:20.2px;top:688.35px;width:149.70000000000002px;height:1.3px;background:rgba(0,0,0,0.6);"></div>
<div class="r" style="left:207.8px;top:688.35px;width:102.19999999999996px;height:1.3px;background:rgba(0,0,0,0.6);"></div>
<div class="r" style="left:345.2px;top:688.35px;width:377.2px;height:1.3px;background:rgba(0,0,0,0.6);"></div>
<div class="r" style="left:20.2px;top:709.35px;width:149.70000000000002px;height:1.3px;background:rgba(0,0,0,0.6);"></div>
<div class="r" style="left:207.8px;top:709.35px;width:102.19999999999996px;height:1.3px;background:rgba(0,0,0,0.6);"></div>
<div class="r" style="left:345.2px;top:709.35px;width:377.2px;height:1.3px;background:rgba(0,0,0,0.6);"></div>
<div class="r" style="left:344.35px;top:230.8px;width:1.3px;height:480.2000000000001px;background:rgba(0,0,0,0.42);"></div>
<div class="r" style="left:527.35px;top:230.8px;width:1.3px;height:480.2000000000001px;background:rgba(0,0,0,0.42);"></div>
<div class="r" style="left:616.35px;top:230.8px;width:1.3px;height:480.2000000000001px;background:rgba(0,0,0,0.42);"></div>
<div class="r" style="left:721.35px;top:230.8px;width:1.3px;height:480.2000000000001px;background:rgba(0,0,0,0.42);"></div>
<div class="r" style="left:733.9px;top:252.35px;width:89.6px;height:1.3px;background:rgba(0,0,0,0.6);"></div>
<div class="r" style="left:733.9px;top:273.35px;width:89.6px;height:1.3px;background:rgba(0,0,0,0.6);"></div>
<div class="r" style="left:733.9px;top:295.35px;width:89.6px;height:1.3px;background:rgba(0,0,0,0.6);"></div>
<div class="r" style="left:733.9px;top:317.35px;width:89.6px;height:1.3px;background:rgba(0,0,0,0.6);"></div>
<div class="r" style="left:733.9px;top:339.35px;width:89.6px;height:1.3px;background:rgba(0,0,0,0.6);"></div>
<div class="r" style="left:733.9px;top:361.35px;width:89.6px;height:1.3px;background:rgba(0,0,0,0.6);"></div>
<div class="r" style="left:733.9px;top:382.35px;width:89.6px;height:1.3px;background:rgba(0,0,0,0.6);"></div>
<div class="r" style="left:733.9px;top:404.35px;width:89.6px;height:1.3px;background:rgba(0,0,0,0.6);"></div>
<div class="r" style="left:733.35px;top:230.8px;width:1.3px;height:175.00000000000003px;background:rgba(0,0,0,0.42);"></div>
<div class="r" style="left:822.35px;top:230.8px;width:1.3px;height:175.00000000000003px;background:rgba(0,0,0,0.42);"></div>
<div class="t" style="left:45.35px;top:242.50000000000003px;font-size:13.8px;color:rgba(0,0,0,0.8);font-weight:normal;transform:translate(-50%,-50%) scaleX(0.88);transform-origin:center center;-webkit-text-stroke:0.2px rgba(0,0,0,0.8)">년차</div>
<div class="t" style="left:95.5px;top:242.50000000000003px;font-size:13.8px;color:rgba(0,0,0,0.8);font-weight:normal;transform:translate(-50%,-50%) scaleX(0.88);transform-origin:center center;-webkit-text-stroke:0.2px rgba(0,0,0,0.8)">나이</div>
<div class="t" style="left:144.9px;top:242.50000000000003px;font-size:13.8px;color:rgba(0,0,0,0.8);font-weight:normal;transform:translate(-50%,-50%) scaleX(0.88);transform-origin:center center;-webkit-text-stroke:0.2px rgba(0,0,0,0.8)">연도</div>
<div class="t" style="left:258.6px;top:242.50000000000003px;font-size:13.8px;color:rgba(0,0,0,0.8);font-weight:normal;transform:translate(-50%,-50%) scaleX(0.815);transform-origin:center center;-webkit-text-stroke:0.2px rgba(0,0,0,0.8)">투자금(원금)</div>
<div class="t" style="left:392.6px;top:242.50000000000003px;font-size:13.8px;color:rgba(0,0,0,0.8);font-weight:normal;transform:translate(-50%,-50%) scaleX(0.78);transform-origin:center center;-webkit-text-stroke:0.2px rgba(0,0,0,0.8)">5%</div>
<div class="t" style="left:484.15px;top:242.50000000000003px;font-size:13.8px;color:rgba(0,0,0,0.8);font-weight:normal;transform:translate(-50%,-50%) scaleX(0.78);transform-origin:center center;-webkit-text-stroke:0.2px rgba(0,0,0,0.8)">10%</div>
<div class="t" style="left:572.8px;top:242.50000000000003px;font-size:13.8px;color:rgba(0,0,0,0.8);font-weight:normal;transform:translate(-50%,-50%) scaleX(0.78);transform-origin:center center;-webkit-text-stroke:0.2px rgba(0,0,0,0.8)">15%</div>
<div class="t" style="left:669.55px;top:242.50000000000003px;font-size:13.8px;color:rgba(0,0,0,0.8);font-weight:normal;transform:translate(-50%,-50%) scaleX(0.78);transform-origin:center center;-webkit-text-stroke:0.2px rgba(0,0,0,0.8)">20%</div>
<div class="t" style="left:778.4px;top:242.50000000000003px;font-size:13.8px;color:rgba(0,0,0,0.8);font-weight:normal;transform:translate(-50%,-50%) scaleX(0.84);transform-origin:center center;-webkit-text-stroke:0.2px rgba(0,0,0,0.8)">Color Index</div>
<div class="t" style="left:45.35px;top:264.3px;font-size:13.8px;color:rgba(0,0,0,0.8);font-weight:normal;transform:translate(-50%,-50%) scaleX(0.78);transform-origin:center center;-webkit-text-stroke:0.2px rgba(0,0,0,0.8)">1</div>
<div class="t" style="left:95.5px;top:264.3px;font-size:13.8px;color:rgba(0,0,0,0.8);font-weight:normal;transform:translate(-50%,-50%) scaleX(0.78);transform-origin:center center;-webkit-text-stroke:0.2px rgba(0,0,0,0.8)">56</div>
<div class="t" style="left:144.9px;top:264.3px;font-size:13.8px;color:rgba(0,0,0,0.8);font-weight:normal;transform:translate(-50%,-50%) scaleX(0.78);transform-origin:center center;-webkit-text-stroke:0.2px rgba(0,0,0,0.8)">2025</div>
<div class="t" style="left:45.35px;top:286.1px;font-size:13.8px;color:rgba(0,0,0,0.8);font-weight:normal;transform:translate(-50%,-50%) scaleX(0.78);transform-origin:center center;-webkit-text-stroke:0.2px rgba(0,0,0,0.8)">2</div>
<div class="t" style="left:95.5px;top:286.1px;font-size:13.8px;color:rgba(0,0,0,0.8);font-weight:normal;transform:translate(-50%,-50%) scaleX(0.78);transform-origin:center center;-webkit-text-stroke:0.2px rgba(0,0,0,0.8)">57</div>
<div class="t" style="left:144.9px;top:286.1px;font-size:13.8px;color:rgba(0,0,0,0.8);font-weight:normal;transform:translate(-50%,-50%) scaleX(0.78);transform-origin:center center;-webkit-text-stroke:0.2px rgba(0,0,0,0.8)">2026</div>
<div class="t" style="left:45.35px;top:307.90000000000003px;font-size:13.8px;color:rgba(0,0,0,0.8);font-weight:normal;transform:translate(-50%,-50%) scaleX(0.78);transform-origin:center center;-webkit-text-stroke:0.2px rgba(0,0,0,0.8)">3</div>
<div class="t" style="left:95.5px;top:307.90000000000003px;font-size:13.8px;color:rgba(0,0,0,0.8);font-weight:normal;transform:translate(-50%,-50%) scaleX(0.78);transform-origin:center center;-webkit-text-stroke:0.2px rgba(0,0,0,0.8)">58</div>
<div class="t" style="left:144.9px;top:307.90000000000003px;font-size:13.8px;color:rgba(0,0,0,0.8);font-weight:normal;transform:translate(-50%,-50%) scaleX(0.78);transform-origin:center center;-webkit-text-stroke:0.2px rgba(0,0,0,0.8)">2027</div>
<div class="t" style="left:45.35px;top:329.7px;font-size:13.8px;color:rgba(0,0,0,0.8);font-weight:normal;transform:translate(-50%,-50%) scaleX(0.78);transform-origin:center center;-webkit-text-stroke:0.2px rgba(0,0,0,0.8)">4</div>
<div class="t" style="left:95.5px;top:329.7px;font-size:13.8px;color:rgba(0,0,0,0.8);font-weight:normal;transform:translate(-50%,-50%) scaleX(0.78);transform-origin:center center;-webkit-text-stroke:0.2px rgba(0,0,0,0.8)">59</div>
<div class="t" style="left:144.9px;top:329.7px;font-size:13.8px;color:rgba(0,0,0,0.8);font-weight:normal;transform:translate(-50%,-50%) scaleX(0.78);transform-origin:center center;-webkit-text-stroke:0.2px rgba(0,0,0,0.8)">2028</div>
<div class="t" style="left:45.35px;top:351.5px;font-size:13.8px;color:rgba(0,0,0,0.8);font-weight:normal;transform:translate(-50%,-50%) scaleX(0.78);transform-origin:center center;-webkit-text-stroke:0.2px rgba(0,0,0,0.8)">5</div>
<div class="t" style="left:95.5px;top:351.5px;font-size:13.8px;color:rgba(0,0,0,0.8);font-weight:normal;transform:translate(-50%,-50%) scaleX(0.78);transform-origin:center center;-webkit-text-stroke:0.2px rgba(0,0,0,0.8)">60</div>
<div class="t" style="left:144.9px;top:351.5px;font-size:13.8px;color:rgba(0,0,0,0.8);font-weight:normal;transform:translate(-50%,-50%) scaleX(0.78);transform-origin:center center;-webkit-text-stroke:0.2px rgba(0,0,0,0.8)">2029</div>
<div class="t" style="left:45.35px;top:373.3px;font-size:13.8px;color:rgba(0,0,0,0.8);font-weight:normal;transform:translate(-50%,-50%) scaleX(0.78);transform-origin:center center;-webkit-text-stroke:0.2px rgba(0,0,0,0.8)">6</div>
<div class="t" style="left:95.5px;top:373.3px;font-size:13.8px;color:rgba(0,0,0,0.8);font-weight:normal;transform:translate(-50%,-50%) scaleX(0.78);transform-origin:center center;-webkit-text-stroke:0.2px rgba(0,0,0,0.8)">61</div>
<div class="t" style="left:144.9px;top:373.3px;font-size:13.8px;color:rgba(0,0,0,0.8);font-weight:normal;transform:translate(-50%,-50%) scaleX(0.78);transform-origin:center center;-webkit-text-stroke:0.2px rgba(0,0,0,0.8)">2030</div>
<div class="t" style="left:45.35px;top:395.09999999999997px;font-size:13.8px;color:rgba(0,0,0,0.8);font-weight:normal;transform:translate(-50%,-50%) scaleX(0.78);transform-origin:center center;-webkit-text-stroke:0.2px rgba(0,0,0,0.8)">7</div>
<div class="t" style="left:95.5px;top:395.09999999999997px;font-size:13.8px;color:rgba(0,0,0,0.8);font-weight:normal;transform:translate(-50%,-50%) scaleX(0.78);transform-origin:center center;-webkit-text-stroke:0.2px rgba(0,0,0,0.8)">62</div>
<div class="t" style="left:144.9px;top:395.09999999999997px;font-size:13.8px;color:rgba(0,0,0,0.8);font-weight:normal;transform:translate(-50%,-50%) scaleX(0.78);transform-origin:center center;-webkit-text-stroke:0.2px rgba(0,0,0,0.8)">2031</div>
<div class="t" style="left:45.35px;top:416.90000000000003px;font-size:13.8px;color:rgba(0,0,0,0.8);font-weight:normal;transform:translate(-50%,-50%) scaleX(0.78);transform-origin:center center;-webkit-text-stroke:0.2px rgba(0,0,0,0.8)">8</div>
<div class="t" style="left:95.5px;top:416.90000000000003px;font-size:13.8px;color:rgba(0,0,0,0.8);font-weight:normal;transform:translate(-50%,-50%) scaleX(0.78);transform-origin:center center;-webkit-text-stroke:0.2px rgba(0,0,0,0.8)">63</div>
<div class="t" style="left:144.9px;top:416.90000000000003px;font-size:13.8px;color:rgba(0,0,0,0.8);font-weight:normal;transform:translate(-50%,-50%) scaleX(0.78);transform-origin:center center;-webkit-text-stroke:0.2px rgba(0,0,0,0.8)">2032</div>
<div class="t" style="left:45.35px;top:438.7px;font-size:13.8px;color:rgba(0,0,0,0.8);font-weight:normal;transform:translate(-50%,-50%) scaleX(0.78);transform-origin:center center;-webkit-text-stroke:0.2px rgba(0,0,0,0.8)">9</div>
<div class="t" style="left:95.5px;top:438.7px;font-size:13.8px;color:rgba(0,0,0,0.8);font-weight:normal;transform:translate(-50%,-50%) scaleX(0.78);transform-origin:center center;-webkit-text-stroke:0.2px rgba(0,0,0,0.8)">64</div>
<div class="t" style="left:144.9px;top:438.7px;font-size:13.8px;color:rgba(0,0,0,0.8);font-weight:normal;transform:translate(-50%,-50%) scaleX(0.78);transform-origin:center center;-webkit-text-stroke:0.2px rgba(0,0,0,0.8)">2033</div>
<div class="t" style="left:45.35px;top:460.5px;font-size:13.8px;color:rgba(0,0,0,0.8);font-weight:normal;transform:translate(-50%,-50%) scaleX(0.78);transform-origin:center center;-webkit-text-stroke:0.2px rgba(0,0,0,0.8)">10</div>
<div class="t" style="left:95.5px;top:460.5px;font-size:13.8px;color:rgba(0,0,0,0.8);font-weight:normal;transform:translate(-50%,-50%) scaleX(0.78);transform-origin:center center;-webkit-text-stroke:0.2px rgba(0,0,0,0.8)">65</div>
<div class="t" style="left:144.9px;top:460.5px;font-size:13.8px;color:rgba(0,0,0,0.8);font-weight:normal;transform:translate(-50%,-50%) scaleX(0.78);transform-origin:center center;-webkit-text-stroke:0.2px rgba(0,0,0,0.8)">2034</div>
<div class="t" style="left:45.35px;top:482.3px;font-size:13.8px;color:rgba(0,0,0,0.8);font-weight:normal;transform:translate(-50%,-50%) scaleX(0.78);transform-origin:center center;-webkit-text-stroke:0.2px rgba(0,0,0,0.8)">11</div>
<div class="t" style="left:95.5px;top:482.3px;font-size:13.8px;color:rgba(0,0,0,0.8);font-weight:normal;transform:translate(-50%,-50%) scaleX(0.78);transform-origin:center center;-webkit-text-stroke:0.2px rgba(0,0,0,0.8)">66</div>
<div class="t" style="left:144.9px;top:482.3px;font-size:13.8px;color:rgba(0,0,0,0.8);font-weight:normal;transform:translate(-50%,-50%) scaleX(0.78);transform-origin:center center;-webkit-text-stroke:0.2px rgba(0,0,0,0.8)">2035</div>
<div class="t" style="left:45.35px;top:504.1px;font-size:13.8px;color:rgba(0,0,0,0.8);font-weight:normal;transform:translate(-50%,-50%) scaleX(0.78);transform-origin:center center;-webkit-text-stroke:0.2px rgba(0,0,0,0.8)">12</div>
<div class="t" style="left:95.5px;top:504.1px;font-size:13.8px;color:rgba(0,0,0,0.8);font-weight:normal;transform:translate(-50%,-50%) scaleX(0.78);transform-origin:center center;-webkit-text-stroke:0.2px rgba(0,0,0,0.8)">67</div>
<div class="t" style="left:144.9px;top:504.1px;font-size:13.8px;color:rgba(0,0,0,0.8);font-weight:normal;transform:translate(-50%,-50%) scaleX(0.78);transform-origin:center center;-webkit-text-stroke:0.2px rgba(0,0,0,0.8)">2036</div>
<div class="t" style="left:45.35px;top:525.9px;font-size:13.8px;color:rgba(0,0,0,0.8);font-weight:normal;transform:translate(-50%,-50%) scaleX(0.78);transform-origin:center center;-webkit-text-stroke:0.2px rgba(0,0,0,0.8)">13</div>
<div class="t" style="left:95.5px;top:525.9px;font-size:13.8px;color:rgba(0,0,0,0.8);font-weight:normal;transform:translate(-50%,-50%) scaleX(0.78);transform-origin:center center;-webkit-text-stroke:0.2px rgba(0,0,0,0.8)">68</div>
<div class="t" style="left:144.9px;top:525.9px;font-size:13.8px;color:rgba(0,0,0,0.8);font-weight:normal;transform:translate(-50%,-50%) scaleX(0.78);transform-origin:center center;-webkit-text-stroke:0.2px rgba(0,0,0,0.8)">2037</div>
<div class="t" style="left:45.35px;top:547.6999999999999px;font-size:13.8px;color:rgba(0,0,0,0.8);font-weight:normal;transform:translate(-50%,-50%) scaleX(0.78);transform-origin:center center;-webkit-text-stroke:0.2px rgba(0,0,0,0.8)">14</div>
<div class="t" style="left:95.5px;top:547.6999999999999px;font-size:13.8px;color:rgba(0,0,0,0.8);font-weight:normal;transform:translate(-50%,-50%) scaleX(0.78);transform-origin:center center;-webkit-text-stroke:0.2px rgba(0,0,0,0.8)">69</div>
<div class="t" style="left:144.9px;top:547.6999999999999px;font-size:13.8px;color:rgba(0,0,0,0.8);font-weight:normal;transform:translate(-50%,-50%) scaleX(0.78);transform-origin:center center;-webkit-text-stroke:0.2px rgba(0,0,0,0.8)">2038</div>
<div class="t" style="left:45.35px;top:569.4999999999999px;font-size:13.8px;color:rgba(0,0,0,0.8);font-weight:normal;transform:translate(-50%,-50%) scaleX(0.78);transform-origin:center center;-webkit-text-stroke:0.2px rgba(0,0,0,0.8)">15</div>
<div class="t" style="left:95.5px;top:569.4999999999999px;font-size:13.8px;color:rgba(0,0,0,0.8);font-weight:normal;transform:translate(-50%,-50%) scaleX(0.78);transform-origin:center center;-webkit-text-stroke:0.2px rgba(0,0,0,0.8)">70</div>
<div class="t" style="left:144.9px;top:569.4999999999999px;font-size:13.8px;color:rgba(0,0,0,0.8);font-weight:normal;transform:translate(-50%,-50%) scaleX(0.78);transform-origin:center center;-webkit-text-stroke:0.2px rgba(0,0,0,0.8)">2039</div>
<div class="t" style="left:45.35px;top:591.3px;font-size:13.8px;color:rgba(0,0,0,0.8);font-weight:normal;transform:translate(-50%,-50%) scaleX(0.78);transform-origin:center center;-webkit-text-stroke:0.2px rgba(0,0,0,0.8)">16</div>
<div class="t" style="left:95.5px;top:591.3px;font-size:13.8px;color:rgba(0,0,0,0.8);font-weight:normal;transform:translate(-50%,-50%) scaleX(0.78);transform-origin:center center;-webkit-text-stroke:0.2px rgba(0,0,0,0.8)">71</div>
<div class="t" style="left:144.9px;top:591.3px;font-size:13.8px;color:rgba(0,0,0,0.8);font-weight:normal;transform:translate(-50%,-50%) scaleX(0.78);transform-origin:center center;-webkit-text-stroke:0.2px rgba(0,0,0,0.8)">2040</div>
<div class="t" style="left:45.35px;top:613.1px;font-size:13.8px;color:rgba(0,0,0,0.8);font-weight:normal;transform:translate(-50%,-50%) scaleX(0.78);transform-origin:center center;-webkit-text-stroke:0.2px rgba(0,0,0,0.8)">17</div>
<div class="t" style="left:95.5px;top:613.1px;font-size:13.8px;color:rgba(0,0,0,0.8);font-weight:normal;transform:translate(-50%,-50%) scaleX(0.78);transform-origin:center center;-webkit-text-stroke:0.2px rgba(0,0,0,0.8)">72</div>
<div class="t" style="left:144.9px;top:613.1px;font-size:13.8px;color:rgba(0,0,0,0.8);font-weight:normal;transform:translate(-50%,-50%) scaleX(0.78);transform-origin:center center;-webkit-text-stroke:0.2px rgba(0,0,0,0.8)">2041</div>
<div class="t" style="left:45.35px;top:634.9px;font-size:13.8px;color:rgba(0,0,0,0.8);font-weight:normal;transform:translate(-50%,-50%) scaleX(0.78);transform-origin:center center;-webkit-text-stroke:0.2px rgba(0,0,0,0.8)">18</div>
<div class="t" style="left:95.5px;top:634.9px;font-size:13.8px;color:rgba(0,0,0,0.8);font-weight:normal;transform:translate(-50%,-50%) scaleX(0.78);transform-origin:center center;-webkit-text-stroke:0.2px rgba(0,0,0,0.8)">73</div>
<div class="t" style="left:144.9px;top:634.9px;font-size:13.8px;color:rgba(0,0,0,0.8);font-weight:normal;transform:translate(-50%,-50%) scaleX(0.78);transform-origin:center center;-webkit-text-stroke:0.2px rgba(0,0,0,0.8)">2042</div>
<div class="t" style="left:45.35px;top:656.6999999999999px;font-size:13.8px;color:rgba(0,0,0,0.8);font-weight:normal;transform:translate(-50%,-50%) scaleX(0.78);transform-origin:center center;-webkit-text-stroke:0.2px rgba(0,0,0,0.8)">19</div>
<div class="t" style="left:95.5px;top:656.6999999999999px;font-size:13.8px;color:rgba(0,0,0,0.8);font-weight:normal;transform:translate(-50%,-50%) scaleX(0.78);transform-origin:center center;-webkit-text-stroke:0.2px rgba(0,0,0,0.8)">74</div>
<div class="t" style="left:144.9px;top:656.6999999999999px;font-size:13.8px;color:rgba(0,0,0,0.8);font-weight:normal;transform:translate(-50%,-50%) scaleX(0.78);transform-origin:center center;-webkit-text-stroke:0.2px rgba(0,0,0,0.8)">2043</div>
<div class="t" style="left:45.35px;top:678.4999999999999px;font-size:13.8px;color:rgba(0,0,0,0.8);font-weight:normal;transform:translate(-50%,-50%) scaleX(0.78);transform-origin:center center;-webkit-text-stroke:0.2px rgba(0,0,0,0.8)">20</div>
<div class="t" style="left:95.5px;top:678.4999999999999px;font-size:13.8px;color:rgba(0,0,0,0.8);font-weight:normal;transform:translate(-50%,-50%) scaleX(0.78);transform-origin:center center;-webkit-text-stroke:0.2px rgba(0,0,0,0.8)">75</div>
<div class="t" style="left:144.9px;top:678.4999999999999px;font-size:13.8px;color:rgba(0,0,0,0.8);font-weight:normal;transform:translate(-50%,-50%) scaleX(0.78);transform-origin:center center;-webkit-text-stroke:0.2px rgba(0,0,0,0.8)">2044</div>
<div class="t" style="left:45.35px;top:700.3px;font-size:13.8px;color:rgba(0,0,0,0.8);font-weight:normal;transform:translate(-50%,-50%) scaleX(0.78);transform-origin:center center;-webkit-text-stroke:0.2px rgba(0,0,0,0.8)">21</div>
<div class="t" style="left:95.5px;top:700.3px;font-size:13.8px;color:rgba(0,0,0,0.8);font-weight:normal;transform:translate(-50%,-50%) scaleX(0.78);transform-origin:center center;-webkit-text-stroke:0.2px rgba(0,0,0,0.8)">76</div>
<div class="t" style="left:144.9px;top:700.3px;font-size:13.8px;color:rgba(0,0,0,0.8);font-weight:normal;transform:translate(-50%,-50%) scaleX(0.78);transform-origin:center center;-webkit-text-stroke:0.2px rgba(0,0,0,0.8)">2045</div>
<div class="t" style="left:302.9px;top:264.3px;font-size:13.8px;color:rgba(0,0,0,0.8);font-weight:normal;transform:translate(-100%,-50%) scaleX(0.78);transform-origin:right center;-webkit-text-stroke:0.2px rgba(0,0,0,0.8)">36,000,000</div>
<div class="t" style="left:302.9px;top:286.1px;font-size:13.8px;color:rgba(0,0,0,0.8);font-weight:normal;transform:translate(-100%,-50%) scaleX(0.78);transform-origin:right center;-webkit-text-stroke:0.2px rgba(0,0,0,0.8)">36,000,000</div>
<div class="t" style="left:302.9px;top:307.90000000000003px;font-size:13.8px;color:rgba(0,0,0,0.8);font-weight:normal;transform:translate(-100%,-50%) scaleX(0.78);transform-origin:right center;-webkit-text-stroke:0.2px rgba(0,0,0,0.8)">36,000,000</div>
<div class="t" style="left:302.9px;top:329.7px;font-size:13.8px;color:rgba(0,0,0,0.8);font-weight:normal;transform:translate(-100%,-50%) scaleX(0.78);transform-origin:right center;-webkit-text-stroke:0.2px rgba(0,0,0,0.8)">36,000,000</div>
<div class="t" style="left:302.9px;top:351.5px;font-size:13.8px;color:rgba(0,0,0,0.8);font-weight:normal;transform:translate(-100%,-50%) scaleX(0.78);transform-origin:right center;-webkit-text-stroke:0.2px rgba(0,0,0,0.8)">36,000,000</div>
<div class="t" style="left:302.9px;top:373.3px;font-size:13.8px;color:rgba(0,0,0,0.8);font-weight:normal;transform:translate(-100%,-50%) scaleX(0.78);transform-origin:right center;-webkit-text-stroke:0.2px rgba(0,0,0,0.8)">40,000,000</div>
<div class="t" style="left:302.9px;top:395.09999999999997px;font-size:13.8px;color:rgba(0,0,0,0.8);font-weight:normal;transform:translate(-100%,-50%) scaleX(0.78);transform-origin:right center;-webkit-text-stroke:0.2px rgba(0,0,0,0.8)">40,000,000</div>
<div class="t" style="left:302.9px;top:416.90000000000003px;font-size:13.8px;color:rgba(0,0,0,0.8);font-weight:normal;transform:translate(-100%,-50%) scaleX(0.78);transform-origin:right center;-webkit-text-stroke:0.2px rgba(0,0,0,0.8)">40,000,000</div>
<div class="t" style="left:302.9px;top:438.7px;font-size:13.8px;color:rgba(0,0,0,0.8);font-weight:normal;transform:translate(-100%,-50%) scaleX(0.78);transform-origin:right center;-webkit-text-stroke:0.2px rgba(0,0,0,0.8)">40,000,000</div>
<div class="t" style="left:302.9px;top:460.5px;font-size:13.8px;color:rgba(0,0,0,0.8);font-weight:normal;transform:translate(-100%,-50%) scaleX(0.78);transform-origin:right center;-webkit-text-stroke:0.2px rgba(0,0,0,0.8)">40,000,000</div>
<div class="t" style="left:302.9px;top:482.3px;font-size:13.8px;color:rgba(0,0,0,0.8);font-weight:normal;transform:translate(-100%,-50%) scaleX(0.78);transform-origin:right center;-webkit-text-stroke:0.2px rgba(0,0,0,0.8)">40,000,000</div>
<div class="t" style="left:302.9px;top:504.1px;font-size:13.8px;color:rgba(0,0,0,0.8);font-weight:normal;transform:translate(-100%,-50%) scaleX(0.78);transform-origin:right center;-webkit-text-stroke:0.2px rgba(0,0,0,0.8)">40,000,000</div>
<div class="t" style="left:302.9px;top:525.9px;font-size:13.8px;color:rgba(0,0,0,0.8);font-weight:normal;transform:translate(-100%,-50%) scaleX(0.78);transform-origin:right center;-webkit-text-stroke:0.2px rgba(0,0,0,0.8)">40,000,000</div>
<div class="t" style="left:302.9px;top:547.6999999999999px;font-size:13.8px;color:rgba(0,0,0,0.8);font-weight:normal;transform:translate(-100%,-50%) scaleX(0.78);transform-origin:right center;-webkit-text-stroke:0.2px rgba(0,0,0,0.8)">40,000,000</div>
<div class="t" style="left:302.9px;top:569.4999999999999px;font-size:13.8px;color:rgba(0,0,0,0.8);font-weight:normal;transform:translate(-100%,-50%) scaleX(0.78);transform-origin:right center;-webkit-text-stroke:0.2px rgba(0,0,0,0.8)">40,000,000</div>
<div class="t" style="left:433.5px;top:264.3px;font-size:13.8px;color:rgba(0,0,0,0.8);font-weight:normal;transform:translate(-100%,-50%) scaleX(0.78);transform-origin:right center;-webkit-text-stroke:0.2px rgba(0,0,0,0.8)">36,000,000</div>
<div class="t" style="left:521.8px;top:264.3px;font-size:13.8px;color:rgba(0,0,0,0.8);font-weight:normal;transform:translate(-100%,-50%) scaleX(0.78);transform-origin:right center;-webkit-text-stroke:0.2px rgba(0,0,0,0.8)">36,000,000</div>
<div class="t" style="left:610.8px;top:264.3px;font-size:13.8px;color:rgba(0,0,0,0.8);font-weight:normal;transform:translate(-100%,-50%) scaleX(0.78);transform-origin:right center;-webkit-text-stroke:0.2px rgba(0,0,0,0.8)">36,000,000</div>
<div class="t" style="left:715.3px;top:264.3px;font-size:13.8px;color:rgba(0,0,0,0.8);font-weight:normal;transform:translate(-100%,-50%) scaleX(0.78);transform-origin:right center;-webkit-text-stroke:0.2px rgba(0,0,0,0.8)">36,000,000</div>
<div class="t" style="left:433.5px;top:286.1px;font-size:13.8px;color:rgba(0,0,0,0.8);font-weight:normal;transform:translate(-100%,-50%) scaleX(0.78);transform-origin:right center;-webkit-text-stroke:0.2px rgba(0,0,0,0.8)">73,800,000</div>
<div class="t" style="left:521.8px;top:286.1px;font-size:13.8px;color:rgba(0,0,0,0.8);font-weight:normal;transform:translate(-100%,-50%) scaleX(0.78);transform-origin:right center;-webkit-text-stroke:0.2px rgba(0,0,0,0.8)">75,600,000</div>
<div class="t" style="left:610.8px;top:286.1px;font-size:13.8px;color:rgba(0,0,0,0.8);font-weight:normal;transform:translate(-100%,-50%) scaleX(0.78);transform-origin:right center;-webkit-text-stroke:0.2px rgba(0,0,0,0.8)">77,400,000</div>
<div class="t" style="left:715.3px;top:286.1px;font-size:13.8px;color:rgba(0,0,0,0.8);font-weight:normal;transform:translate(-100%,-50%) scaleX(0.78);transform-origin:right center;-webkit-text-stroke:0.2px rgba(0,0,0,0.8)">79,200,000</div>
<div class="t" style="left:433.5px;top:307.90000000000003px;font-size:13.8px;color:rgba(0,40,10,0.82);font-weight:normal;transform:translate(-100%,-50%) scaleX(0.78);transform-origin:right center;-webkit-text-stroke:0.2px rgba(0,40,10,0.82)">113,490,000</div>
<div class="t" style="left:521.8px;top:307.90000000000003px;font-size:13.8px;color:rgba(0,40,10,0.82);font-weight:normal;transform:translate(-100%,-50%) scaleX(0.78);transform-origin:right center;-webkit-text-stroke:0.2px rgba(0,40,10,0.82)">119,160,000</div>
<div class="t" style="left:610.8px;top:307.90000000000003px;font-size:13.8px;color:rgba(0,40,10,0.82);font-weight:normal;transform:translate(-100%,-50%) scaleX(0.78);transform-origin:right center;-webkit-text-stroke:0.2px rgba(0,40,10,0.82)">125,010,000</div>
<div class="t" style="left:715.3px;top:307.90000000000003px;font-size:13.8px;color:rgba(0,40,10,0.82);font-weight:normal;transform:translate(-100%,-50%) scaleX(0.78);transform-origin:right center;-webkit-text-stroke:0.2px rgba(0,40,10,0.82)">131,040,000</div>
<div class="t" style="left:433.5px;top:329.7px;font-size:13.8px;color:rgba(0,40,10,0.82);font-weight:normal;transform:translate(-100%,-50%) scaleX(0.78);transform-origin:right center;-webkit-text-stroke:0.2px rgba(0,40,10,0.82)">155,164,500</div>
<div class="t" style="left:521.8px;top:329.7px;font-size:13.8px;color:rgba(0,40,10,0.82);font-weight:normal;transform:translate(-100%,-50%) scaleX(0.78);transform-origin:right center;-webkit-text-stroke:0.2px rgba(0,40,10,0.82)">167,076,000</div>
<div class="t" style="left:610.8px;top:329.7px;font-size:13.8px;color:rgba(0,40,10,0.82);font-weight:normal;transform:translate(-100%,-50%) scaleX(0.78);transform-origin:right center;-webkit-text-stroke:0.2px rgba(0,40,10,0.82)">179,761,500</div>
<div class="t" style="left:715.3px;top:329.7px;font-size:13.8px;color:rgba(0,40,10,0.82);font-weight:normal;transform:translate(-100%,-50%) scaleX(0.78);transform-origin:right center;-webkit-text-stroke:0.2px rgba(0,40,10,0.82)">193,248,000</div>
<div class="t" style="left:433.5px;top:351.5px;font-size:13.8px;color:rgba(0,40,10,0.82);font-weight:normal;transform:translate(-100%,-50%) scaleX(0.78);transform-origin:right center;-webkit-text-stroke:0.2px rgba(0,40,10,0.82)">198,922,725</div>
<div class="t" style="left:521.8px;top:351.5px;font-size:13.8px;color:rgba(0,40,10,0.82);font-weight:normal;transform:translate(-100%,-50%) scaleX(0.78);transform-origin:right center;-webkit-text-stroke:0.2px rgba(0,40,10,0.82)">219,783,600</div>
<div class="t" style="left:610.8px;top:351.5px;font-size:13.8px;color:rgba(0,40,10,0.82);font-weight:normal;transform:translate(-100%,-50%) scaleX(0.78);transform-origin:right center;-webkit-text-stroke:0.2px rgba(0,40,10,0.82)">242,725,725</div>
<div class="t" style="left:715.3px;top:351.5px;font-size:13.8px;color:rgba(0,40,10,0.82);font-weight:normal;transform:translate(-100%,-50%) scaleX(0.78);transform-origin:right center;-webkit-text-stroke:0.2px rgba(0,40,10,0.82)">267,897,600</div>
<div class="t" style="left:433.5px;top:373.3px;font-size:13.8px;color:rgba(0,40,10,0.82);font-weight:normal;transform:translate(-100%,-50%) scaleX(0.78);transform-origin:right center;-webkit-text-stroke:0.2px rgba(0,40,10,0.82)">248,868,861</div>
<div class="t" style="left:521.8px;top:373.3px;font-size:13.8px;color:rgba(0,40,10,0.82);font-weight:normal;transform:translate(-100%,-50%) scaleX(0.78);transform-origin:right center;-webkit-text-stroke:0.2px rgba(0,40,10,0.82)">281,761,960</div>
<div class="t" style="left:610.8px;top:373.3px;font-size:13.8px;color:rgba(0,45,15,0.84);font-weight:normal;transform:translate(-100%,-50%) scaleX(0.78);transform-origin:right center;-webkit-text-stroke:0.2px rgba(0,45,15,0.84)">319,134,584</div>
<div class="t" style="left:715.3px;top:373.3px;font-size:13.8px;color:rgba(0,45,15,0.84);font-weight:normal;transform:translate(-100%,-50%) scaleX(0.78);transform-origin:right center;-webkit-text-stroke:0.2px rgba(0,45,15,0.84)">361,477,120</div>
<div class="t" style="left:433.5px;top:395.09999999999997px;font-size:13.8px;color:rgba(0,45,15,0.84);font-weight:normal;transform:translate(-100%,-50%) scaleX(0.78);transform-origin:right center;-webkit-text-stroke:0.2px rgba(0,45,15,0.84)">301,312,304</div>
<div class="t" style="left:521.8px;top:395.09999999999997px;font-size:13.8px;color:rgba(0,45,15,0.84);font-weight:normal;transform:translate(-100%,-50%) scaleX(0.78);transform-origin:right center;-webkit-text-stroke:0.2px rgba(0,45,15,0.84)">349,938,156</div>
<div class="t" style="left:610.8px;top:395.09999999999997px;font-size:13.8px;color:rgba(0,45,15,0.84);font-weight:normal;transform:translate(-100%,-50%) scaleX(0.78);transform-origin:right center;-webkit-text-stroke:0.2px rgba(0,45,15,0.84)">407,004,771</div>
<div class="t" style="left:715.3px;top:395.09999999999997px;font-size:13.8px;color:rgba(0,45,15,0.84);font-weight:normal;transform:translate(-100%,-50%) scaleX(0.78);transform-origin:right center;-webkit-text-stroke:0.2px rgba(0,45,15,0.84)">473,772,544</div>
<div class="t" style="left:433.5px;top:416.90000000000003px;font-size:13.8px;color:rgba(0,45,15,0.84);font-weight:normal;transform:translate(-100%,-50%) scaleX(0.78);transform-origin:right center;-webkit-text-stroke:0.2px rgba(0,45,15,0.84)">356,377,920</div>
<div class="t" style="left:521.8px;top:416.90000000000003px;font-size:13.8px;color:rgba(0,45,15,0.84);font-weight:normal;transform:translate(-100%,-50%) scaleX(0.78);transform-origin:right center;-webkit-text-stroke:0.2px rgba(0,45,15,0.84)">424,931,972</div>
<div class="t" style="left:610.8px;top:416.90000000000003px;font-size:13.8px;color:rgba(0,50,18,0.86);font-weight:normal;transform:translate(-100%,-50%) scaleX(0.78);transform-origin:right center;-webkit-text-stroke:0.2px rgba(0,50,18,0.86)">508,055,487</div>
<div class="t" style="left:715.3px;top:416.90000000000003px;font-size:13.8px;color:rgba(0,50,18,0.86);font-weight:normal;transform:translate(-100%,-50%) scaleX(0.78);transform-origin:right center;-webkit-text-stroke:0.2px rgba(0,50,18,0.86)">608,527,053</div>
<div class="t" style="left:433.5px;top:438.7px;font-size:13.8px;color:rgba(0,45,15,0.84);font-weight:normal;transform:translate(-100%,-50%) scaleX(0.78);transform-origin:right center;-webkit-text-stroke:0.2px rgba(0,45,15,0.84)">414,196,816</div>
<div class="t" style="left:521.8px;top:438.7px;font-size:13.8px;color:rgba(0,50,18,0.86);font-weight:normal;transform:translate(-100%,-50%) scaleX(0.78);transform-origin:right center;-webkit-text-stroke:0.2px rgba(0,50,18,0.86)">507,425,169</div>
<div class="t" style="left:610.8px;top:438.7px;font-size:13.8px;color:rgba(0,50,18,0.86);font-weight:normal;transform:translate(-100%,-50%) scaleX(0.78);transform-origin:right center;-webkit-text-stroke:0.2px rgba(0,50,18,0.86)">624,263,810</div>
<div class="t" style="left:715.3px;top:438.7px;font-size:13.8px;color:rgba(0,50,18,0.86);font-weight:normal;transform:translate(-100%,-50%) scaleX(0.78);transform-origin:right center;-webkit-text-stroke:0.2px rgba(0,50,18,0.86)">770,232,463</div>
<div class="t" style="left:433.5px;top:460.5px;font-size:13.8px;color:rgba(0,45,15,0.84);font-weight:normal;transform:translate(-100%,-50%) scaleX(0.78);transform-origin:right center;-webkit-text-stroke:0.2px rgba(0,45,15,0.84)">474,906,656</div>
<div class="t" style="left:521.8px;top:460.5px;font-size:13.8px;color:rgba(0,50,18,0.86);font-weight:normal;transform:translate(-100%,-50%) scaleX(0.78);transform-origin:right center;-webkit-text-stroke:0.2px rgba(0,50,18,0.86)">598,167,686</div>
<div class="t" style="left:610.8px;top:460.5px;font-size:13.8px;color:rgba(0,50,18,0.86);font-weight:normal;transform:translate(-100%,-50%) scaleX(0.78);transform-origin:right center;-webkit-text-stroke:0.2px rgba(0,50,18,0.86)">757,903,382</div>
<div class="t" style="left:715.3px;top:460.5px;font-size:13.8px;color:rgba(0,50,18,0.86);font-weight:normal;transform:translate(-100%,-50%) scaleX(0.78);transform-origin:right center;-webkit-text-stroke:0.2px rgba(0,50,18,0.86)">964,278,956</div>
<div class="t" style="left:433.5px;top:482.3px;font-size:13.8px;color:rgba(0,50,18,0.86);font-weight:normal;transform:translate(-100%,-50%) scaleX(0.78);transform-origin:right center;-webkit-text-stroke:0.2px rgba(0,50,18,0.86)">538,651,989</div>
<div class="t" style="left:521.8px;top:482.3px;font-size:13.8px;color:rgba(0,50,18,0.86);font-weight:normal;transform:translate(-100%,-50%) scaleX(0.78);transform-origin:right center;-webkit-text-stroke:0.2px rgba(0,50,18,0.86)">697,984,454</div>
<div class="t" style="left:610.8px;top:482.3px;font-size:13.8px;color:rgba(0,50,18,0.86);font-weight:normal;transform:translate(-100%,-50%) scaleX(0.78);transform-origin:right center;-webkit-text-stroke:0.2px rgba(0,50,18,0.86)">911,588,889</div>
<div class="t" style="left:715.3px;top:482.3px;font-size:13.8px;color:rgba(0,20,35,0.8);font-weight:normal;transform:translate(-100%,-50%) scaleX(0.78);transform-origin:right center;-webkit-text-stroke:0.2px rgba(0,20,35,0.8)">1,197,134,747</div>
<div class="t" style="left:433.5px;top:504.1px;font-size:13.8px;color:rgba(0,50,18,0.86);font-weight:normal;transform:translate(-100%,-50%) scaleX(0.78);transform-origin:right center;-webkit-text-stroke:0.2px rgba(0,50,18,0.86)">605,584,589</div>
<div class="t" style="left:521.8px;top:504.1px;font-size:13.8px;color:rgba(0,50,18,0.86);font-weight:normal;transform:translate(-100%,-50%) scaleX(0.78);transform-origin:right center;-webkit-text-stroke:0.2px rgba(0,50,18,0.86)">807,782,900</div>
<div class="t" style="left:610.8px;top:504.1px;font-size:13.8px;color:rgba(0,20,35,0.8);font-weight:normal;transform:translate(-100%,-50%) scaleX(0.78);transform-origin:right center;-webkit-text-stroke:0.2px rgba(0,20,35,0.8)">1,088,327,222</div>
<div class="t" style="left:715.3px;top:504.1px;font-size:13.8px;color:rgba(0,20,35,0.8);font-weight:normal;transform:translate(-100%,-50%) scaleX(0.78);transform-origin:right center;-webkit-text-stroke:0.2px rgba(0,20,35,0.8)">1,476,561,697</div>
<div class="t" style="left:433.5px;top:525.9px;font-size:13.8px;color:rgba(0,50,18,0.86);font-weight:normal;transform:translate(-100%,-50%) scaleX(0.78);transform-origin:right center;-webkit-text-stroke:0.2px rgba(0,50,18,0.86)">675,863,818</div>
<div class="t" style="left:521.8px;top:525.9px;font-size:13.8px;color:rgba(0,50,18,0.86);font-weight:normal;transform:translate(-100%,-50%) scaleX(0.78);transform-origin:right center;-webkit-text-stroke:0.2px rgba(0,50,18,0.86)">928,561,190</div>
<div class="t" style="left:610.8px;top:525.9px;font-size:13.8px;color:rgba(0,20,35,0.8);font-weight:normal;transform:translate(-100%,-50%) scaleX(0.78);transform-origin:right center;-webkit-text-stroke:0.2px rgba(0,20,35,0.8)">1,291,576,305</div>
<div class="t" style="left:715.3px;top:525.9px;font-size:13.8px;color:rgba(0,20,35,0.8);font-weight:normal;transform:translate(-100%,-50%) scaleX(0.78);transform-origin:right center;-webkit-text-stroke:0.2px rgba(0,20,35,0.8)">1,811,874,036</div>
<div class="t" style="left:433.5px;top:547.6999999999999px;font-size:13.8px;color:rgba(0,50,18,0.86);font-weight:normal;transform:translate(-100%,-50%) scaleX(0.78);transform-origin:right center;-webkit-text-stroke:0.2px rgba(0,50,18,0.86)">749,657,009</div>
<div class="t" style="left:521.8px;top:547.6999999999999px;font-size:13.8px;color:rgba(0,20,35,0.8);font-weight:normal;transform:translate(-100%,-50%) scaleX(0.78);transform-origin:right center;-webkit-text-stroke:0.2px rgba(0,20,35,0.8)">1,061,417,309</div>
<div class="t" style="left:610.8px;top:547.6999999999999px;font-size:13.8px;color:rgba(0,20,35,0.8);font-weight:normal;transform:translate(-100%,-50%) scaleX(0.78);transform-origin:right center;-webkit-text-stroke:0.2px rgba(0,20,35,0.8)">1,525,312,751</div>
<div class="t" style="left:715.3px;top:547.6999999999999px;font-size:13.8px;color:rgba(0,20,35,0.8);font-weight:normal;transform:translate(-100%,-50%) scaleX(0.78);transform-origin:right center;-webkit-text-stroke:0.2px rgba(0,20,35,0.8)">2,214,248,843</div>
<div class="t" style="left:433.5px;top:569.4999999999999px;font-size:13.8px;color:rgba(0,50,18,0.86);font-weight:normal;transform:translate(-100%,-50%) scaleX(0.78);transform-origin:right center;-webkit-text-stroke:0.2px rgba(0,50,18,0.86)">827,139,859</div>
<div class="t" style="left:521.8px;top:569.4999999999999px;font-size:13.8px;color:rgba(0,20,35,0.8);font-weight:normal;transform:translate(-100%,-50%) scaleX(0.78);transform-origin:right center;-webkit-text-stroke:0.2px rgba(0,20,35,0.8)">1,207,559,039</div>
<div class="t" style="left:610.8px;top:569.4999999999999px;font-size:13.8px;color:rgba(0,20,35,0.8);font-weight:normal;transform:translate(-100%,-50%) scaleX(0.78);transform-origin:right center;-webkit-text-stroke:0.2px rgba(0,20,35,0.8)">1,794,109,664</div>
<div class="t" style="left:715.3px;top:569.4999999999999px;font-size:13.8px;color:rgba(0,20,35,0.8);font-weight:normal;transform:translate(-100%,-50%) scaleX(0.78);transform-origin:right center;-webkit-text-stroke:0.2px rgba(0,20,35,0.8)">2,697,098,612</div>
<div class="t" style="left:433.5px;top:591.3px;font-size:13.8px;color:rgba(0,50,18,0.86);font-weight:normal;transform:translate(-100%,-50%) scaleX(0.78);transform-origin:right center;-webkit-text-stroke:0.2px rgba(0,50,18,0.86)">868,496,852</div>
<div class="t" style="left:521.8px;top:591.3px;font-size:13.8px;color:rgba(0,20,35,0.8);font-weight:normal;transform:translate(-100%,-50%) scaleX(0.78);transform-origin:right center;-webkit-text-stroke:0.2px rgba(0,20,35,0.8)">1,328,314,943</div>
<div class="t" style="left:610.8px;top:591.3px;font-size:13.8px;color:rgba(0,20,35,0.8);font-weight:normal;transform:translate(-100%,-50%) scaleX(0.78);transform-origin:right center;-webkit-text-stroke:0.2px rgba(0,20,35,0.8)">2,063,226,114</div>
<div class="t" style="left:715.3px;top:591.3px;font-size:13.8px;color:rgba(0,25,40,0.82);font-weight:normal;transform:translate(-100%,-50%) scaleX(0.78);transform-origin:right center;-webkit-text-stroke:0.2px rgba(0,25,40,0.82)">3,236,518,334</div>
<div class="t" style="left:433.5px;top:613.1px;font-size:13.8px;color:rgba(0,50,18,0.86);font-weight:normal;transform:translate(-100%,-50%) scaleX(0.78);transform-origin:right center;-webkit-text-stroke:0.2px rgba(0,50,18,0.86)">911,921,695</div>
<div class="t" style="left:521.8px;top:613.1px;font-size:13.8px;color:rgba(0,20,35,0.8);font-weight:normal;transform:translate(-100%,-50%) scaleX(0.78);transform-origin:right center;-webkit-text-stroke:0.2px rgba(0,20,35,0.8)">1,461,146,438</div>
<div class="t" style="left:610.8px;top:613.1px;font-size:13.8px;color:rgba(0,20,35,0.8);font-weight:normal;transform:translate(-100%,-50%) scaleX(0.78);transform-origin:right center;-webkit-text-stroke:0.2px rgba(0,20,35,0.8)">2,372,710,031</div>
<div class="t" style="left:715.3px;top:613.1px;font-size:13.8px;color:rgba(0,25,40,0.82);font-weight:normal;transform:translate(-100%,-50%) scaleX(0.78);transform-origin:right center;-webkit-text-stroke:0.2px rgba(0,25,40,0.82)">3,883,822,001</div>
<div class="t" style="left:433.5px;top:634.9px;font-size:13.8px;color:rgba(0,50,18,0.86);font-weight:normal;transform:translate(-100%,-50%) scaleX(0.78);transform-origin:right center;-webkit-text-stroke:0.2px rgba(0,50,18,0.86)">957,517,780</div>
<div class="t" style="left:521.8px;top:634.9px;font-size:13.8px;color:rgba(0,20,35,0.8);font-weight:normal;transform:translate(-100%,-50%) scaleX(0.78);transform-origin:right center;-webkit-text-stroke:0.2px rgba(0,20,35,0.8)">1,607,261,081</div>
<div class="t" style="left:610.8px;top:634.9px;font-size:13.8px;color:rgba(0,20,35,0.8);font-weight:normal;transform:translate(-100%,-50%) scaleX(0.78);transform-origin:right center;-webkit-text-stroke:0.2px rgba(0,20,35,0.8)">2,728,616,535</div>
<div class="t" style="left:715.3px;top:634.9px;font-size:13.8px;color:rgba(0,25,40,0.82);font-weight:normal;transform:translate(-100%,-50%) scaleX(0.78);transform-origin:right center;-webkit-text-stroke:0.2px rgba(0,25,40,0.82)">4,660,586,401</div>
<div class="t" style="left:433.5px;top:656.6999999999999px;font-size:13.8px;color:rgba(0,20,35,0.8);font-weight:normal;transform:translate(-100%,-50%) scaleX(0.78);transform-origin:right center;-webkit-text-stroke:0.2px rgba(0,20,35,0.8)">1,005,393,669</div>
<div class="t" style="left:521.8px;top:656.6999999999999px;font-size:13.8px;color:rgba(0,20,35,0.8);font-weight:normal;transform:translate(-100%,-50%) scaleX(0.78);transform-origin:right center;-webkit-text-stroke:0.2px rgba(0,20,35,0.8)">1,767,987,190</div>
<div class="t" style="left:610.8px;top:656.6999999999999px;font-size:13.8px;color:rgba(0,25,40,0.82);font-weight:normal;transform:translate(-100%,-50%) scaleX(0.78);transform-origin:right center;-webkit-text-stroke:0.2px rgba(0,25,40,0.82)">3,137,909,015</div>
<div class="t" style="left:715.3px;top:656.6999999999999px;font-size:13.8px;color:rgba(0,30,45,0.84);font-weight:normal;transform:translate(-100%,-50%) scaleX(0.78);transform-origin:right center;-webkit-text-stroke:0.2px rgba(0,30,45,0.84)">5,592,703,682</div>
<div class="t" style="left:433.5px;top:678.4999999999999px;font-size:13.8px;color:rgba(0,20,35,0.8);font-weight:normal;transform:translate(-100%,-50%) scaleX(0.78);transform-origin:right center;-webkit-text-stroke:0.2px rgba(0,20,35,0.8)">1,055,663,352</div>
<div class="t" style="left:521.8px;top:678.4999999999999px;font-size:13.8px;color:rgba(0,20,35,0.8);font-weight:normal;transform:translate(-100%,-50%) scaleX(0.78);transform-origin:right center;-webkit-text-stroke:0.2px rgba(0,20,35,0.8)">1,944,785,909</div>
<div class="t" style="left:610.8px;top:678.4999999999999px;font-size:13.8px;color:rgba(0,25,40,0.82);font-weight:normal;transform:translate(-100%,-50%) scaleX(0.78);transform-origin:right center;-webkit-text-stroke:0.2px rgba(0,25,40,0.82)">3,608,595,368</div>
<div class="t" style="left:715.3px;top:678.4999999999999px;font-size:13.8px;color:rgba(0,30,45,0.84);font-weight:normal;transform:translate(-100%,-50%) scaleX(0.78);transform-origin:right center;-webkit-text-stroke:0.2px rgba(0,30,45,0.84)">6,711,244,418</div>
<div class="t" style="left:433.5px;top:700.3px;font-size:13.8px;color:rgba(0,20,35,0.8);font-weight:normal;transform:translate(-100%,-50%) scaleX(0.78);transform-origin:right center;-webkit-text-stroke:0.2px rgba(0,20,35,0.8)">1,108,446,520</div>
<div class="t" style="left:521.8px;top:700.3px;font-size:13.8px;color:rgba(0,20,35,0.8);font-weight:normal;transform:translate(-100%,-50%) scaleX(0.78);transform-origin:right center;-webkit-text-stroke:0.2px rgba(0,20,35,0.8)">2,139,264,499</div>
<div class="t" style="left:610.8px;top:700.3px;font-size:13.8px;color:rgba(0,25,40,0.82);font-weight:normal;transform:translate(-100%,-50%) scaleX(0.78);transform-origin:right center;-webkit-text-stroke:0.2px rgba(0,25,40,0.82)">4,149,884,673</div>
<div class="t" style="left:715.3px;top:700.3px;font-size:13.8px;color:rgba(0,30,45,0.84);font-weight:normal;transform:translate(-100%,-50%) scaleX(0.78);transform-origin:right center;-webkit-text-stroke:0.2px rgba(0,30,45,0.84)">8,053,493,301</div>
<div class="t" style="left:778.4px;top:264.3px;font-size:13.8px;color:rgba(0,40,10,0.82);font-weight:normal;transform:translate(-50%,-50%) scaleX(0.83);transform-origin:center center;-webkit-text-stroke:0.2px rgba(0,40,10,0.82)">1억 이상 달성</div>
<div class="t" style="left:778.4px;top:286.1px;font-size:13.8px;color:rgba(0,45,15,0.84);font-weight:normal;transform:translate(-50%,-50%) scaleX(0.83);transform-origin:center center;-webkit-text-stroke:0.2px rgba(0,45,15,0.84)">3억 이상 달성</div>
<div class="t" style="left:778.4px;top:307.90000000000003px;font-size:13.8px;color:rgba(0,50,18,0.86);font-weight:normal;transform:translate(-50%,-50%) scaleX(0.83);transform-origin:center center;-webkit-text-stroke:0.2px rgba(0,50,18,0.86)">5억 이상 달성</div>
<div class="t" style="left:778.4px;top:329.7px;font-size:13.8px;color:rgba(0,20,35,0.8);font-weight:normal;transform:translate(-50%,-50%) scaleX(0.83);transform-origin:center center;-webkit-text-stroke:0.2px rgba(0,20,35,0.8)">10억 이상 달성</div>
<div class="t" style="left:778.4px;top:351.5px;font-size:13.8px;color:rgba(0,25,40,0.82);font-weight:normal;transform:translate(-50%,-50%) scaleX(0.83);transform-origin:center center;-webkit-text-stroke:0.2px rgba(0,25,40,0.82)">30억 이상 달성</div>
<div class="t" style="left:778.4px;top:373.3px;font-size:13.8px;color:rgba(0,30,45,0.84);font-weight:normal;transform:translate(-50%,-50%) scaleX(0.83);transform-origin:center center;-webkit-text-stroke:0.2px rgba(0,30,45,0.84)">50억 이상 달성</div>
<div class="t" style="left:778.4px;top:395.09999999999997px;font-size:13.8px;color:rgba(40,10,0,0.8);font-weight:normal;transform:translate(-50%,-50%) scaleX(0.83);transform-origin:center center;-webkit-text-stroke:0.2px rgba(40,10,0,0.8)">100억 이상 달성</div>
<div class="r" style="left:1026.4px;top:230.5px;width:15.6px;height:481.1px;background:#f0f0f0;"></div>
<div class="r" style="left:1028.4px;top:216.3px;width:11.4px;height:14.2px;background:#fff;border:1px solid #d4d4d4"></div>
<div class="r" style="left:1028.4px;top:270.4px;width:11.4px;height:217.6px;background:#fff;border:1px solid #c8c8c8"></div>
<div class="r" style="left:1028.4px;top:697.4px;width:11.4px;height:14px;background:#fff;border:1px solid #d4d4d4"></div>
<svg class="r" style="left:1031px;top:221px;" width="6" height="4" viewBox="0 0 6 4"><path d="M0 3.5H6L3 0Z" fill="#555"/></svg>
<svg class="r" style="left:1031px;top:702px;" width="6" height="4" viewBox="0 0 6 4"><path d="M0 0.5H6L3 4Z" fill="#555"/></svg>
<div class="r" style="left:0px;top:710.6px;width:1042px;height:21.4px;background:#f2f2f2;"></div>
<div class="r" style="left:64.2px;top:710.6px;width:88.6px;height:19.5px;background:#fff;"></div>
<div class="r" style="left:64.2px;top:728.6px;width:88.6px;height:2px;background:#217346;"></div>
<div class="t" style="left:107.5px;top:721.4px;font-size:12px;color:#217346;font-weight:normal;transform:translate(-50%,-50%) scaleX(0.88);transform-origin:center center;">수익률 계산 (2)</div>
<div class="t" style="left:193px;top:721.4px;font-size:12px;color:#444;font-weight:normal;transform:translate(-50%,-50%) scaleX(0.88);transform-origin:center center;">노후자금 계산</div>
<div class="r" style="left:234px;top:714px;width:1px;height:14px;background:#c6c6c6;"></div>
<div class="t" style="left:269.6px;top:721.4px;font-size:12px;color:#444;font-weight:normal;transform:translate(-50%,-50%) scaleX(0.88);transform-origin:center center;">수익률 계산</div>
<div class="r" style="left:305.7px;top:714px;width:1px;height:14px;background:#c6c6c6;"></div>
<svg class="r" style="left:17px;top:717px;" width="5" height="8" viewBox="0 0 5 8"><path d="M4 0.5L1 4L4 7.5" fill="none" stroke="#b4b4b4" stroke-width="1.1"/></svg>
<svg class="r" style="left:34px;top:717px;" width="5" height="8" viewBox="0 0 5 8"><path d="M1 0.5L4 4L1 7.5" fill="none" stroke="#b4b4b4" stroke-width="1.1"/></svg>
<svg class="r" style="left:325.5px;top:715px;" width="14" height="14" viewBox="0 0 14 14"><circle cx="7" cy="7" r="6.2" fill="#fff" stroke="#777" stroke-width="1.1"/><path d="M7 3.5V10.5M3.5 7H10.5" stroke="#666" stroke-width="1.2"/></svg>
<svg class="r" style="left:629px;top:717px;" width="3" height="10" viewBox="0 0 3 10"><circle cx="1.5" cy="1" r="0.6" fill="#aaa"/><circle cx="1.5" cy="4.5" r="0.6" fill="#aaa"/><circle cx="1.5" cy="8" r="0.6" fill="#aaa"/></svg>
<div class="r" style="left:634px;top:714.8px;width:13px;height:13.6px;background:#fff;border:1px solid #d4d4d4"></div>
<svg class="r" style="left:639px;top:718.5px;" width="4" height="6" viewBox="0 0 4 6"><path d="M3.5 0V6L0 3Z" fill="#555"/></svg>
<div class="r" style="left:648px;top:714.8px;width:345px;height:13.6px;background:#fff;border:1px solid #c8c8c8"></div>
<div class="r" style="left:993px;top:714.8px;width:21.8px;height:13.6px;background:#e6e6e6;"></div>
<div class="r" style="left:1014.8px;top:714.8px;width:11.8px;height:13.6px;background:#fff;border:1px solid #d4d4d4"></div>
<svg class="r" style="left:1019px;top:718.5px;" width="4" height="6" viewBox="0 0 4 6"><path d="M0.5 0V6L4 3Z" fill="#555"/></svg>
<div class="r" style="left:0px;top:732px;width:1042px;height:21px;background:#217346;"></div>
<div class="t" style="left:3.4px;top:742.7px;font-size:11.5px;color:#e8f1eb;font-weight:normal;transform:translate(0,-50%) scaleX(0.82);transform-origin:left center;">편집</div>
<svg class="r" style="left:833.5px;top:737px;" width="10" height="10" viewBox="0 0 10 10"><rect x="0.5" y="0.5" width="9" height="9" fill="none" stroke="#cfe3d6"/><path d="M3.5 0.5V9.5M6.5 0.5V9.5M0.5 3.5H9.5M0.5 6.5H9.5" stroke="#cfe3d6"/></svg>
<svg class="r" style="left:859px;top:737px;" width="10" height="10" viewBox="0 0 10 10"><rect x="0.5" y="0.5" width="9" height="9" fill="#5e9a74" stroke="#a9cbb5"/><path d="M2.5 3H7.5M2.5 5H7.5M2.5 7H7.5" stroke="#a9cbb5"/></svg>
<svg class="r" style="left:885px;top:737px;" width="10" height="11" viewBox="0 0 10 11"><rect x="0.5" y="0.5" width="9" height="10" fill="none" stroke="#f0f6f2"/><rect x="2" y="0.5" width="2" height="5" fill="#f0f6f2"/><rect x="5.5" y="0.5" width="2" height="5" fill="#f0f6f2"/></svg>
<div class="r" style="left:906px;top:742px;width:4.5px;height:1.2px;background:#0f4d2a;"></div>
<div class="r" style="left:913.7px;top:742px;width:76.7px;height:1.4px;background:#b9d5c3;"></div>
<div class="r" style="left:952px;top:739.8px;width:1.4px;height:5.4px;background:#e0ece4;"></div>
<svg class="r" style="left:993.5px;top:738px;" width="8" height="8" viewBox="0 0 8 8"><path d="M4 0V8M0 4H8" stroke="#0f4d2a" stroke-width="1.6"/></svg>
<div class="t" style="left:1036.3px;top:742.7px;font-size:12.5px;color:#a9d0b7;font-weight:normal;transform:translate(-100%,-50%) scaleX(0.82);transform-origin:right center;">100 %</div>
<div class="r" style="left:0;top:753px;width:1042px;height:36px;background:linear-gradient(to right,#1e6ec0 0px,#1f70c2 56px,#2592e0 58px,#2a9ae6 300px,#1f8fe4 560px,#1b86de 700px,#1a6fcc 800px,#1b5fb8 830px,#1e5cb3 1042px)"></div>
<div class="r" style="left:0;top:753px;width:1042px;height:1px;background:#4ca6e0;opacity:0.6"></div>
<div class="r" style="left:755px;top:753px;width:9px;height:36px;background:rgba(255,255,255,0.55);transform:skewX(42deg);filter:blur(2px)"></div>
<svg class="r" style="left:7px;top:755px;" width="26" height="31" viewBox="0 0 26 31"><defs><radialGradient id="og" cx="50%" cy="40%" r="60%"><stop offset="0" stop-color="#3aa0e8"/><stop offset="0.7" stop-color="#1a5aa0"/><stop offset="1" stop-color="#0f3a70"/></radialGradient></defs><ellipse cx="13" cy="15.5" rx="12.5" ry="15" fill="url(#og)" stroke="#6a8db5" stroke-width="0.8"/><path d="M6 9L12 8L11.5 14L5.5 14.5Z" fill="#f05a28"/><path d="M13 8L19.5 7.5L19 13.5L12.5 14Z" fill="#7cc242"/><path d="M5.5 15.5L11.5 15L11 21L5 21.5Z" fill="#2aa6e8"/><path d="M12.5 15L19 14.5L18.5 21L12 21.5Z" fill="#fdc010"/><ellipse cx="13" cy="8" rx="9" ry="5.5" fill="rgba(255,255,255,0.25)"/></svg>
<div class="r" style="left:43.5px;top:757.5px;width:7px;height:2px;background:repeating-linear-gradient(to right,#2a4f80 0 1.5px,#7aa4d4 1.5px 2.5px)"></div>
<div class="r" style="left:43.5px;top:762.7px;width:7px;height:2px;background:repeating-linear-gradient(to right,#2a4f80 0 1.5px,#7aa4d4 1.5px 2.5px)"></div>
<div class="r" style="left:43.5px;top:767.9px;width:7px;height:2px;background:repeating-linear-gradient(to right,#2a4f80 0 1.5px,#7aa4d4 1.5px 2.5px)"></div>
<div class="r" style="left:43.5px;top:773.1px;width:7px;height:2px;background:repeating-linear-gradient(to right,#2a4f80 0 1.5px,#7aa4d4 1.5px 2.5px)"></div>
<div class="r" style="left:43.5px;top:778.3px;width:7px;height:2px;background:repeating-linear-gradient(to right,#2a4f80 0 1.5px,#7aa4d4 1.5px 2.5px)"></div>
<div class="r" style="left:43.5px;top:783.5px;width:7px;height:2px;background:repeating-linear-gradient(to right,#2a4f80 0 1.5px,#7aa4d4 1.5px 2.5px)"></div>
<svg class="r" style="left:64px;top:755.5px;" width="25" height="29" viewBox="0 0 25 29"><path d="M6.5 16.5C6.5 10.5 10 6.5 14.5 6.5C19 6.5 22.5 10 22.5 15.5V16.5H10C10.3 20 12.3 22.5 15 22.5C17 22.5 18.5 21.5 19.5 20H22.5C21 24.5 18 27 14.5 27C9.5 27 6.5 22.5 6.5 16.5ZM10.2 13.5H19C18.5 11 17 9.5 14.5 9.5C12 9.5 10.7 11 10.2 13.5Z" fill="#8adcfa" stroke="#3aa8e8" stroke-width="0.8"/><path d="M2 26.5C0 23 4 11 13 4.5C18 1 22 0.5 23.5 2" fill="none" stroke="#f8d938" stroke-width="2.4"/></svg>
<div class="r" style="left:100px;top:754px;width:40.3px;height:34px;background:linear-gradient(#c2e7fb,#94d2f6);border:1px solid #dff2fd;border-radius:2px"></div>
<svg class="r" style="left:109px;top:758px;" width="23" height="26" viewBox="0 0 23 26"><path d="M0 3L13 0.5V25.5L0 23Z" fill="#1d6b3c"/><rect x="12" y="4.5" width="10" height="17" fill="#fff" stroke="#1d6b3c" stroke-width="1.2"/><path d="M14 8H20M14 11H20M14 14H20M14 17H20" stroke="#1d6b3c" stroke-width="1"/><path d="M3 8L9.5 18M9.5 8L3 18" stroke="#fff" stroke-width="2"/></svg>
<svg class="r" style="left:152px;top:756px;" width="24" height="28" viewBox="0 0 24 28"><rect x="0.5" y="0.5" width="23" height="27" fill="#2e9a3a" stroke="#3a6a3e"/><rect x="2.5" y="2.5" width="19" height="23" fill="#3fb34a"/><text x="12" y="15" font-size="15" text-anchor="middle" fill="#fff" font-family="Liberation Sans" font-weight="bold">@</text><text x="12" y="25" font-size="9" text-anchor="middle" fill="#fff" font-family="Liberation Serif" font-weight="bold">II</text></svg>
<svg class="r" style="left:195.5px;top:759px;" width="24" height="24" viewBox="0 0 24 24"><circle cx="12" cy="12" r="11.5" fill="#e8453c"/><path d="M12 12L2 17.7A11.5 11.5 0 0 1 1.6 6.5Z" fill="#2aa84a"/><path d="M12 12L1.6 6.5A11.5 11.5 0 0 0 12 23.5L22.5 17Z" fill="#2aa84a"/><path d="M12 12L23.5 12A11.5 11.5 0 0 1 12 23.5L12 12Z" fill="#fbc02d"/><path d="M12 12H23.4A11.5 11.5 0 0 0 20 4Z" fill="#fbc02d"/><circle cx="12" cy="12" r="5.2" fill="#fff"/><circle cx="12" cy="12" r="4" fill="#3b7de8"/></svg>
<svg class="r" style="left:238px;top:759px;" width="24" height="24" viewBox="0 0 24 24"><defs><linearGradient id="eg1" x1="0" y1="0" x2="1" y2="0"><stop offset="0" stop-color="#2f9ee0"/><stop offset="1" stop-color="#55d08a"/></linearGradient><linearGradient id="eg2" x1="0" y1="0" x2="0" y2="1"><stop offset="0" stop-color="#1b7fd0"/><stop offset="1" stop-color="#12489a"/></linearGradient></defs><path d="M2 11C3 4 9 0.5 14 1C20 1.5 23.5 6 23 11C22.8 14 20 15.5 17 15C14.5 14.6 13.5 13 14.5 11.5C12 9 6 9.5 4.5 13Z" fill="url(#eg1)"/><path d="M2 11C1 17 5 23 12 23.5C15 23.7 17.5 23 19.5 21.5C15 22 9 20 8.5 14.5C8.3 12.5 9.5 10.8 11.5 10.5C7 9.5 3 10 2 11Z" fill="url(#eg2)"/></svg>
<div class="r" style="left:273.6px;top:754px;width:40.4px;height:34px;background:rgba(255,255,255,0.18);border:1px solid rgba(255,255,255,0.35);border-radius:2px"></div>
<svg class="r" style="left:282px;top:759px;" width="24" height="25" viewBox="0 0 24 25"><circle cx="12" cy="12.5" r="11" fill="#f4a62a"/><path d="M12 1.5A11 11 0 0 1 23 12.5L12 12.5Z" fill="#7b4fd0"/><path d="M1 12.5A11 11 0 0 1 12 1.5L12 12.5Z" fill="#ef5a3a"/><path d="M7 7H17V14C17 17 14 19.5 12 20.5C10 19.5 7 17 7 14Z" fill="#fff"/><circle cx="12" cy="12" r="1.6" fill="#555"/><rect x="11.4" y="12.5" width="1.2" height="3" fill="#555"/></svg>
<div class="r" style="left:316.8px;top:754px;width:40.9px;height:34px;background:rgba(255,255,255,0.18);border:1px solid rgba(255,255,255,0.35);border-radius:2px"></div>
<svg class="r" style="left:325.5px;top:757.5px;" width="23" height="27" viewBox="0 0 23 27"><path d="M0 3L14 0.5V26.5L0 24Z" fill="#d24726"/><rect x="12" y="5" width="10" height="17" fill="#fff" stroke="#d24726" stroke-width="1.2"/><path d="M14 9H20M14 12.5H20M14 16H20" stroke="#d24726"/><path d="M4 19V7H7.5C9.5 7 10.5 8.5 10.5 10C10.5 12 9 13.2 7.5 13.2H6" fill="none" stroke="#fff" stroke-width="2"/></svg>
<div class="r" style="left:827px;top:756.0px;width:5px;height:2px;background:repeating-linear-gradient(to right,#1a3560 0 1.5px,#6a92c8 1.5px 2.5px)"></div>
<div class="r" style="left:827px;top:761.2px;width:5px;height:2px;background:repeating-linear-gradient(to right,#1a3560 0 1.5px,#6a92c8 1.5px 2.5px)"></div>
<div class="r" style="left:827px;top:766.4px;width:5px;height:2px;background:repeating-linear-gradient(to right,#1a3560 0 1.5px,#6a92c8 1.5px 2.5px)"></div>
<div class="r" style="left:827px;top:771.6px;width:5px;height:2px;background:repeating-linear-gradient(to right,#1a3560 0 1.5px,#6a92c8 1.5px 2.5px)"></div>
<div class="r" style="left:827px;top:776.8px;width:5px;height:2px;background:repeating-linear-gradient(to right,#1a3560 0 1.5px,#6a92c8 1.5px 2.5px)"></div>
<div class="r" style="left:827px;top:782.0px;width:5px;height:2px;background:repeating-linear-gradient(to right,#1a3560 0 1.5px,#6a92c8 1.5px 2.5px)"></div>
<svg class="r" style="left:838px;top:757px;" width="13" height="13" viewBox="0 0 13 13"><circle cx="6.5" cy="6.5" r="5.5" fill="#6aa0d8"/><path d="M3 4C5 2 8 3 9 5C8 8 5 9 3 8Z" fill="#8bc34a"/><path d="M2 12L12 3" stroke="#f2d27a" stroke-width="2"/></svg>
<div class="t" style="left:859px;top:769.8px;font-size:18px;color:#fff;font-weight:normal;transform:translate(-50%,-50%) scaleX(0.9);transform-origin:center center;">A</div>
<div class="t" style="left:874px;top:769.5px;font-size:14px;color:#fff;font-weight:normal;transform:translate(-50%,-50%) scaleX(1);transform-origin:center center;">漢</div>
<svg class="r" style="left:884px;top:763px;" width="13" height="13" viewBox="0 0 13 13"><circle cx="6.5" cy="6.5" r="6" fill="#1f4f9a" stroke="#ddd" stroke-width="1"/><text x="6.5" y="10.5" font-size="10" text-anchor="middle" fill="#fff" font-family="Liberation Sans" font-weight="bold">?</text></svg>
<svg class="r" style="left:902px;top:761px;" width="7" height="16" viewBox="0 0 7 16"><path d="M1 4L4 1L6 3L3 6Z" fill="#ddd"/><path d="M1.5 12H5.5L3.5 14.5Z" fill="#ddd"/></svg>
<svg class="r" style="left:916.5px;top:767px;" width="7" height="5" viewBox="0 0 7 5"><path d="M0 4.5H7L3.5 0Z" fill="#fff"/></svg>
<svg class="r" style="left:932.5px;top:760px;" width="14" height="17" viewBox="0 0 14 17"><path d="M3 15C1 13 1 11 3 9L9 2.5C11 0.5 13.5 1.5 13.5 4C13.5 5 13 6 12 7L6 14C5 15.5 4 15.5 3 15Z" fill="#eee"/><path d="M6 6L9 2.5C11 0.5 13.5 1.5 13.5 4C13.5 5 13 6 12 7L9.5 9.5Z" fill="#9bd23a"/></svg>
<svg class="r" style="left:952px;top:762px;" width="12" height="14" viewBox="0 0 12 14"><path d="M1.5 0.5V13.5" stroke="#fff" stroke-width="1.4"/><path d="M2 1.5C5 0 7 3 11 1.5V7.5C7 9 5 6 2 7.5Z" fill="#fff"/></svg>
<div class="t" style="left:1001px;top:764.2px;font-size:12px;color:#fff;font-weight:normal;transform:translate(-50%,-50%) scaleX(0.82);transform-origin:center center;">오후 9:13</div>
<div class="t" style="left:1001px;top:780.2px;font-size:12px;color:#fff;font-weight:normal;transform:translate(-50%,-50%) scaleX(0.82);transform-origin:center center;">2025-03-10</div>
<div class="r" style="left:1033px;top:753px;width:9px;height:36px;background:#2a6ac0;border-left:1px solid #6a9ad0"></div>
</body></html>
